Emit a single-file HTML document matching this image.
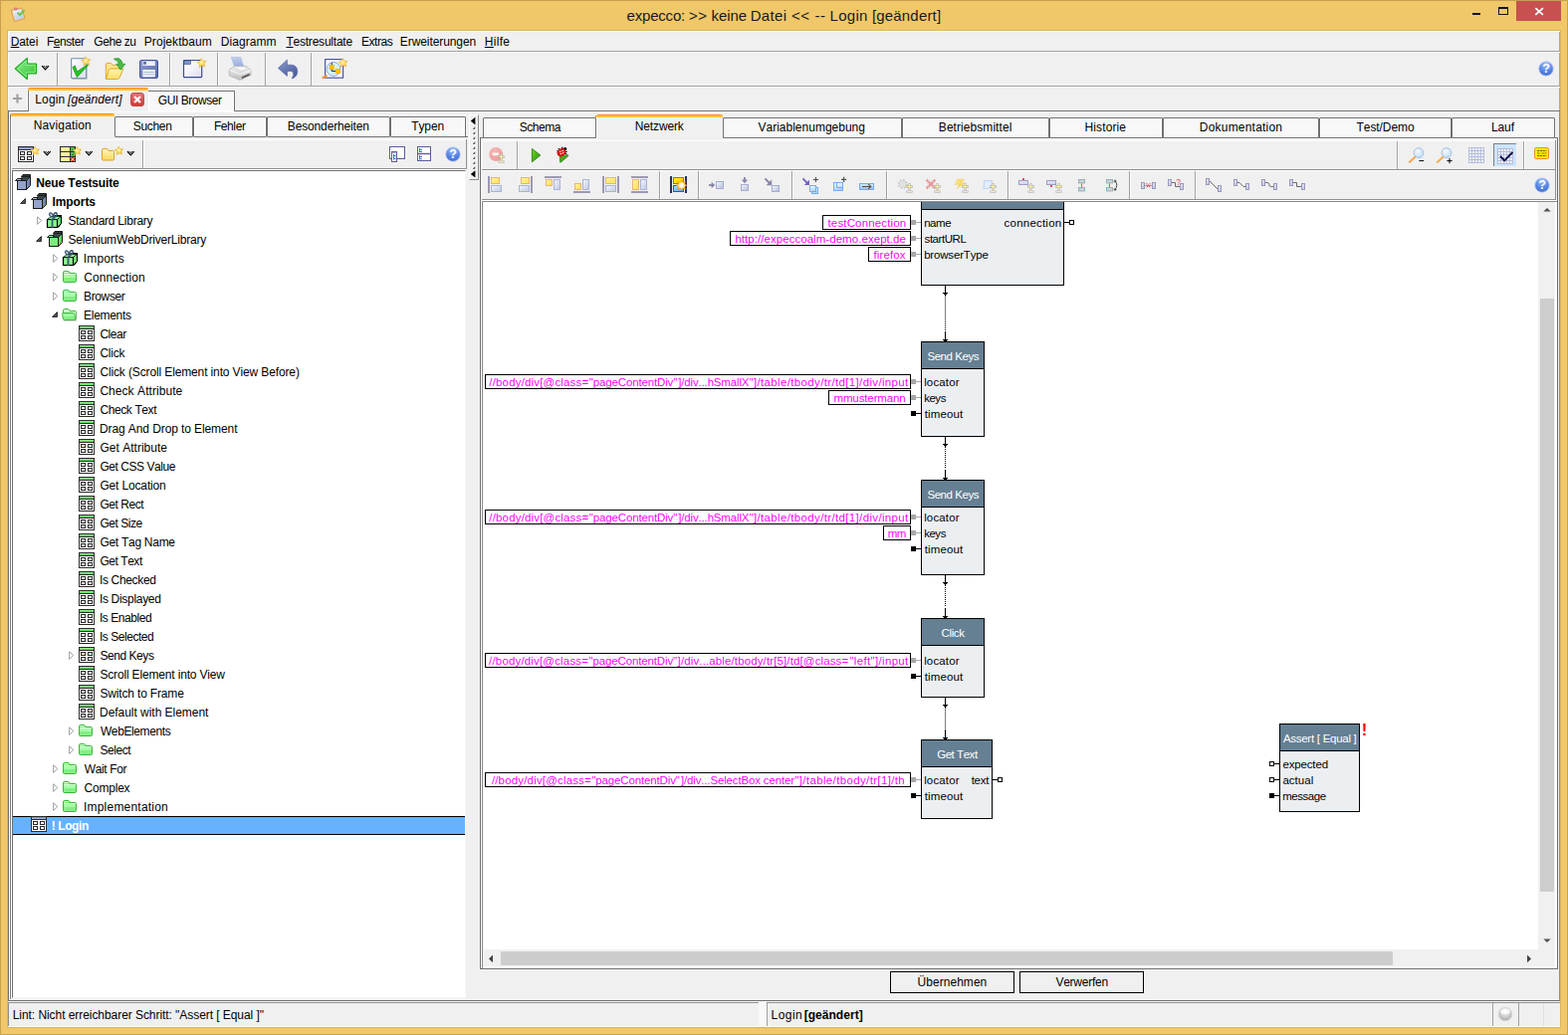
<!DOCTYPE html>
<html lang="de">
<head>
<meta charset="utf-8">
<title>expecco: &gt;&gt; keine Datei &lt;&lt; -- Login [geändert]</title>
<style>
html,body{margin:0;padding:0;}
body{width:1575px;height:1040px;overflow:hidden;background:#F0C869;font-family:"Liberation Sans",sans-serif;font-size:12px;color:#000;font-kerning:none;}
#win{position:absolute;left:0;top:0;width:1575px;height:1040px;overflow:hidden;background:#F0C869;}
#win div,#win svg{position:absolute;box-sizing:border-box;}
#win svg{overflow:visible;}
.t{white-space:pre;line-height:16px;height:16px;font-size:12px;}
.tab{background:#F8F8F8;border:1px solid #707070;box-shadow:inset 0 0 0 1px #fff;border-radius:1px;}
.sel{background:linear-gradient(#FF8A1F 0,#FF8A1F 1px,#FFC632 1px,#FFC12E 3px);border-radius:2px 2px 0 0;}

</style>
</head>
<body>
<div id="win">
<div style="left:0px;top:0px;width:1575px;height:1040px;border:1px solid #C4A24F;"></div>
<div class="t" style="left:629.56px;top:6px;line-height:19px;height:19px;font-size:15px;color:#1A1A1A;"><span style="letter-spacing:-0.190px;">expecco: </span><span style="margin-left:-0.10px;letter-spacing:0.450px;">&gt;&gt; </span><span style="margin-left:-0.41px;letter-spacing:-0.071px;">keine </span><span style="margin-left:-0.52px;letter-spacing:0.331px;">Datei </span><span style="margin-left:0.22px;letter-spacing:0.450px;">&lt;&lt; </span><span style="margin-left:0.48px;letter-spacing:0.450px;">-- </span><span style="margin-left:-0.52px;letter-spacing:0.276px;">Login </span><span style="margin-left:-0.26px;letter-spacing:0.187px;">[geändert]</span></div>
<div style="left:1523px;top:1px;width:45px;height:20px;background:#C75050;"></div>
<svg style="left:1541px;top:7px" width="10" height="10" viewBox="0 0 10 10"><path d="M1.3 1.1 L8.9 7.9 M8.9 1.1 L1.3 7.9" stroke="#fff" stroke-width="1.8" fill="none"/></svg>
<div style="left:1505px;top:7px;width:10px;height:8px;border:1px solid #14141E;border-top-width:2px;"></div>
<div style="left:1479px;top:13px;width:8px;height:2px;background:#14141E;"></div>
<div style="left:7px;top:30px;width:1561px;height:1003px;background:#D9B65B;"></div>
<div style="left:8px;top:31px;width:1559px;height:1001px;background:#F0F0F0;border-left:1px solid #fff;border-top:1px solid #fff;"></div>
<div style="left:1566px;top:32px;width:1px;height:79px;background:#A4A8B0;"></div>
<div class="t" style="left:10.72px;top:34px;line-height:16px;height:16px;letter-spacing:-0.105px;"><u>D</u>atei</div>
<div class="t" style="left:46.92px;top:34px;line-height:16px;height:16px;letter-spacing:-0.450px;">F<u>e</u>nster</div>
<div class="t" style="left:94.30px;top:34px;line-height:16px;height:16px;letter-spacing:-0.450px;">Gehe zu</div>
<div class="t" style="left:144.82px;top:34px;line-height:16px;height:16px;letter-spacing:0.051px;">Projektbaum</div>
<div class="t" style="left:221.82px;top:34px;line-height:16px;height:16px;letter-spacing:0.062px;">Diagramm</div>
<div class="t" style="left:287.43px;top:34px;line-height:16px;height:16px;letter-spacing:-0.222px;"><u>T</u>estresultate</div>
<div class="t" style="left:363.02px;top:34px;line-height:16px;height:16px;letter-spacing:-0.450px;">Extras</div>
<div class="t" style="left:401.82px;top:34px;line-height:16px;height:16px;letter-spacing:-0.085px;">Erweiterungen</div>
<div class="t" style="left:486.82px;top:34px;line-height:16px;height:16px;letter-spacing:0.303px;"><u>H</u>ilfe</div>
<div style="left:8px;top:51px;width:1559px;height:1px;background:#A0A0A0;"></div>
<div style="left:8px;top:52px;width:1559px;height:1px;background:#fff;"></div>
<div style="left:57px;top:53px;width:1px;height:33px;background:#A0A0A0;"></div>
<div style="left:58px;top:53px;width:1px;height:33px;background:#fff;"></div>
<div style="left:170px;top:53px;width:1px;height:33px;background:#A0A0A0;"></div>
<div style="left:171px;top:53px;width:1px;height:33px;background:#fff;"></div>
<div style="left:218px;top:53px;width:1px;height:33px;background:#A0A0A0;"></div>
<div style="left:219px;top:53px;width:1px;height:33px;background:#fff;"></div>
<div style="left:266px;top:53px;width:1px;height:33px;background:#A0A0A0;"></div>
<div style="left:267px;top:53px;width:1px;height:33px;background:#fff;"></div>
<div style="left:312px;top:53px;width:1px;height:33px;background:#A0A0A0;"></div>
<div style="left:313px;top:53px;width:1px;height:33px;background:#fff;"></div>
<div style="left:8px;top:86px;width:1559px;height:1px;background:#A0A0A0;"></div>
<div style="left:8px;top:87px;width:1559px;height:1px;background:#fff;"></div>
<div style="left:8px;top:111px;width:1559px;height:1px;background:#707070;"></div>
<div style="left:8px;top:112px;width:1559px;height:1px;background:#FAFAFA;"></div>
<div style="left:8px;top:110px;width:20px;height:1px;background:#fff;"></div>
<div style="left:27px;top:91px;width:1px;height:20px;background:#fff;"></div>
<div class="tab" style="left:148px;top:91px;width:88px;height:21px;border-bottom:none;"></div>
<div class="t" style="left:158.86px;top:93px;line-height:16px;height:16px;letter-spacing:-0.450px;">GUI Browser</div>
<div style="left:28px;top:89px;width:121px;height:23px;background:#F0F0F0;border-left:1px solid #787878;box-shadow:inset 1px 0 0 #fff;"></div>
<div class="sel" style="left:28px;top:88px;width:121px;height:3px;"></div>
<div style="left:29px;top:91px;width:119px;height:1px;background:#EEF0FA;"></div>
<div class="t" style="left:35.22px;top:92px;line-height:16px;height:16px;"><span style="letter-spacing:0.176px;">Login </span><i style="margin-left:-0.94px;letter-spacing:0.045px;">[geändert]</i></div>
<div style="left:8px;top:1005px;width:1559px;height:1px;background:#707070;"></div>
<div style="left:8px;top:1006px;width:1559px;height:1px;background:#F8F8F8;"></div>
<div style="left:8px;top:1007px;width:1559px;height:1px;background:#909090;"></div>
<div style="left:8px;top:1007px;width:1px;height:24px;background:#909090;"></div>
<div style="left:8px;top:1031px;width:1559px;height:1px;background:#fff;"></div>
<div class="t" style="left:12.72px;top:1012px;line-height:16px;height:16px;letter-spacing:-0.059px;">Lint: Nicht erreichbarer Schritt: &quot;Assert [ Equal ]&quot;</div>
<div style="left:762px;top:1007px;width:8px;height:25px;background:#F8F8F8;"></div>
<div style="left:770px;top:1008px;width:1px;height:23px;background:#A0A0A0;"></div>
<div class="t" style="left:774.62px;top:1012px;line-height:16px;height:16px;"><span style="letter-spacing:0.450px;">Login </span><b style="margin-left:-2.39px;letter-spacing:0.042px;">[geändert]</b></div>
<div style="left:1499px;top:1008px;width:1px;height:23px;background:#A0A0A0;"></div>
<div style="left:1525px;top:1008px;width:1px;height:23px;background:#A0A0A0;"></div>
<div style="left:1550px;top:1008px;width:1px;height:23px;background:#E0E0E0;"></div>
<svg style="left:0;top:0" width="1575" height="1040" viewBox="0 0 1575 1040"><linearGradient id="g1" x1="0" y1="0" x2="0.6" y2="1"><stop offset="0" stop-color="#F4F4FC"/><stop offset="1" stop-color="#B4CCEC"/></linearGradient><path d="M11.2 10.2 L21.6 8 L25.2 18.6 L14.4 21.6 Z" fill="#F0D8B0" stroke="#DC9850" stroke-width="1" stroke-linejoin="round"/><path d="M13 11 L21.4 9.2 L24 17.8 L15.4 20 Z" fill="url(#g1)"/><ellipse cx="15.8" cy="9" rx="2" ry="1.4" fill="#D88080"/><path d="M17.6 12.8 L19.8 15 L24.6 10.2" fill="none" stroke="#6CC850" stroke-width="2.2" stroke-linejoin="round"/><linearGradient id="g2" x1="0" y1="0" x2="1" y2="1"><stop offset="0" stop-color="#8CF08C"/><stop offset="1" stop-color="#35C035"/></linearGradient><path d="M15.3 69 L27.3 58.4 V64.2 H36.4 V73.8 H27.3 V79.6 Z" fill="url(#g2)" stroke="#1FA61F" stroke-width="1.2" stroke-linejoin="round"/><path d="M17.2 69 L26.2 61 V65.3 H35.3 V72.7 H26.2 V77 Z" fill="none" stroke="#A8F4A8" stroke-width="0.9" stroke-linejoin="round" opacity="0.8"/><path d="M42.099999999999994 66.1 L45.5 69.89999999999999 L48.9 66.1" fill="none" stroke="#000" stroke-width="1.25"/><path d="M43.8 65.89999999999999 L45.5 67.69999999999999 L47.199999999999996 65.89999999999999" fill="none" stroke="#000" stroke-width="0.9"/><linearGradient id="g3" x1="0" y1="0" x2="1" y2="1"><stop offset="0" stop-color="#FFFFFF"/><stop offset="1" stop-color="#DCDCEC"/></linearGradient><rect x="71.6" y="58.8" width="15" height="19.8" rx="0.8" fill="url(#g3)" stroke="#7090B0" stroke-width="1.1"/><path d="M72.5 79.3 H87.3 V60" fill="none" stroke="#A8B4C0" stroke-width="0.8"/><path d="M72.9 67.6 L75.3 66 L77.5 72 L88 64.8 L88.5 65.6 L77.4 77.6 Z" fill="#22C422" stroke="#169C16" stroke-width="0.8" stroke-linejoin="round"/><radialGradient id="g4" cx="0.45" cy="0.4" r="0.6"><stop offset="0" stop-color="#FFF6B0"/><stop offset="1" stop-color="#F5C030"/></radialGradient><polygon points="85.98,56.82 87.64,59.54 90.82,59.72 88.74,62.14 89.55,65.22 86.61,63.99 83.93,65.71 84.19,62.54 81.72,60.52 84.83,59.79" fill="url(#g4)" stroke="#E8B030" stroke-width="0.6" stroke-linejoin="round"/><linearGradient id="g5" x1="0" y1="0" x2="0" y2="1"><stop offset="0" stop-color="#FFF4B0"/><stop offset="1" stop-color="#FBDD6A"/></linearGradient><path d="M106.3 79.4 V65 Q106.3 63.4 108 63.4 H111.5 L113.2 65.4 H120 V69" fill="#FBE58A" stroke="#E0A828" stroke-width="1"/><path d="M106.5 79.5 L109.4 70.2 Q109.8 69 111 69 H123.8 L120.6 77 Q119.8 79.5 117.5 79.5 Z" fill="url(#g5)" stroke="#E0A828" stroke-width="1" stroke-linejoin="round"/><path d="M114.3 59.3 Q121.5 56.5 123.2 64.3 L125.8 64.3 L121.2 70.2 L116.8 64.3 L119.6 64.3 Q118.6 60.6 114.3 59.3 Z" fill="#4CB848" stroke="#2E9A2E" stroke-width="0.8" stroke-linejoin="round"/><linearGradient id="g6" x1="0" y1="0" x2="1" y2="1"><stop offset="0" stop-color="#8E9CCC"/><stop offset="1" stop-color="#5A6AA8"/></linearGradient><rect x="140.5" y="60.5" width="18" height="18" rx="1.6" fill="url(#g6)" stroke="#44529A" stroke-width="1"/><rect x="143.4" y="61.4" width="12.4" height="4.6" fill="#EEF0F8"/><rect x="144.2" y="62" width="2.6" height="2.8" fill="#5666A6"/><rect x="143.4" y="70" width="12.4" height="7.4" fill="#F4F6FC"/><path d="M144.4 72.5 H154.8 M144.4 74.8 H154.8" stroke="#A8B8D0" stroke-width="1"/><linearGradient id="g7" x1="0.2" y1="0.2" x2="1" y2="1"><stop offset="0" stop-color="#FFFFFF"/><stop offset="1" stop-color="#DEDCEE"/></linearGradient><rect x="184.5" y="60.5" width="18.2" height="17.2" rx="0.8" fill="url(#g7)" stroke="#3C4E92" stroke-width="1.2"/><rect x="185" y="61" width="6.6" height="3.6" fill="#8497C6" stroke="#3C4E92" stroke-width="0.6"/><radialGradient id="g8" cx="0.45" cy="0.4" r="0.6"><stop offset="0" stop-color="#FFF6B0"/><stop offset="1" stop-color="#F5C030"/></radialGradient><polygon points="202.18,58.62 203.84,61.34 207.02,61.52 204.94,63.94 205.75,67.02 202.81,65.79 200.13,67.51 200.39,64.34 197.92,62.32 201.03,61.59" fill="url(#g8)" stroke="#E8B030" stroke-width="0.6" stroke-linejoin="round"/><linearGradient id="g9" x1="0" y1="0" x2="0" y2="1"><stop offset="0" stop-color="#F2F2F2"/><stop offset="1" stop-color="#BDBDBD"/></linearGradient><linearGradient id="g10" x1="0" y1="0" x2="0" y2="1"><stop offset="0" stop-color="#C4D0EC"/><stop offset="1" stop-color="#94A8D8"/></linearGradient><path d="M232.3 57.4 H241.8 L245 67.6 H235.6 Z" fill="url(#g10)" stroke="#A8B8E0" stroke-width="0.6"/><path d="M230.3 70 L236 66.4 H247 L252 70.6 V75.6 L241 80.4 L230.3 76 Z" fill="url(#g9)" stroke="#B4B4B4" stroke-width="0.8" stroke-linejoin="round"/><path d="M236.6 68.6 L239 67 H246 L248.4 69 L242 71.2 Z" fill="#F8F8F8" stroke="#C8C8C8" stroke-width="0.5"/><path d="M230.6 70.4 L241 74.6 L252 70.8" fill="none" stroke="#FFFFFF" stroke-width="0.8"/><path d="M242.6 77.2 L250.4 73.8 L251 75.8 L243.4 79.2 Z" fill="#606060"/><path d="M244 79.6 L252.6 76 " stroke="#E8E8E8" stroke-width="1"/><linearGradient id="g11" x1="0" y1="0" x2="0.6" y2="1"><stop offset="0" stop-color="#8C9CD0"/><stop offset="1" stop-color="#4A5C9C"/></linearGradient><path d="M279.4 68.4 L288.4 60.2 V65.2 H292.6 Q298.8 65.6 298.8 72 Q298.6 76.6 294 78.8 Q293.4 79 293.2 78.6 Q296 75.4 294.2 72.6 Q293.4 71.4 291.6 71.4 H288.4 V76.4 Z" fill="url(#g11)" stroke="#5566A6" stroke-width="0.7" stroke-linejoin="round"/><rect x="326.6" y="59.6" width="18" height="18.6" fill="#FBF6FA" stroke="#3C4E9A" stroke-width="1.1"/><path d="M327.6 76.2 L324.6 78" stroke="#F09038" stroke-width="2.4" stroke-linecap="round"/><circle cx="335" cy="69.4" r="7" fill="#D4F0FA" stroke="#8C9CD8" stroke-width="0.9"/><path d="M333.2 63 V66 M333.2 68 V71.4 H338" fill="none" stroke="#202020" stroke-width="1"/><rect x="331" y="65.4" width="4.4" height="4.4" fill="#FFC400" stroke="#E8A800" stroke-width="0.5"/><rect x="337.2" y="69.4" width="4.2" height="4.4" fill="#FFC400" stroke="#E8A800" stroke-width="0.5"/><radialGradient id="g12" cx="0.45" cy="0.4" r="0.6"><stop offset="0" stop-color="#FFF6B0"/><stop offset="1" stop-color="#F5C030"/></radialGradient><polygon points="344.18,58.62 345.84,61.34 349.02,61.52 346.94,63.94 347.75,67.02 344.81,65.79 342.13,67.51 342.39,64.34 339.92,62.32 343.03,61.59" fill="url(#g12)" stroke="#E8B030" stroke-width="0.6" stroke-linejoin="round"/><radialGradient id="g13" cx="0.5" cy="0.2" r="0.9"><stop offset="0" stop-color="#A8C4F8"/><stop offset="0.55" stop-color="#5584E4"/><stop offset="1" stop-color="#3A66D0"/></radialGradient><circle cx="1553" cy="69" r="7.3" fill="url(#g13)" stroke="#C4D4F4" stroke-width="0.8"/><text x="1553" y="73.4" text-anchor="middle" font-family="Liberation Sans, sans-serif" font-weight="bold" font-size="12.5" fill="#fff">?</text><path d="M17.5 94.4 V103.6 M12.9 99 H22.1" stroke="#A2A2A2" stroke-width="2.2"/><linearGradient id="g14" x1="0" y1="0" x2="0" y2="1"><stop offset="0" stop-color="#E87878"/><stop offset="1" stop-color="#D03434"/></linearGradient><rect x="131.5" y="93.5" width="13" height="13" rx="2.6" fill="url(#g14)" stroke="#C84848" stroke-width="1"/><path d="M135 97 L141 103 M141 97 L135 103" stroke="#fff" stroke-width="2.2"/><g transform="translate(18,147)"><g shape-rendering="crispEdges"><rect x="0.5" y="0.5" width="15" height="15" fill="#fff" stroke="#2B2B2B" stroke-width="1"/><rect x="1" y="1" width="14" height="2" fill="#A4B2DA"/><rect x="1" y="1" width="14" height="1" fill="#8090C4"/><rect x="1" y="3" width="14" height="1" fill="#2B2B2B"/><rect x="2.5" y="5.5" width="4" height="3" fill="#fff" stroke="#2B2B2B" stroke-width="1"/><rect x="2.5" y="10.5" width="4" height="3" fill="#fff" stroke="#2B2B2B" stroke-width="1"/><rect x="9.5" y="5.5" width="4" height="3" fill="#fff" stroke="#2B2B2B" stroke-width="1"/><rect x="9.5" y="10.5" width="4" height="3" fill="#fff" stroke="#2B2B2B" stroke-width="1"/></g></g><radialGradient id="g15" cx="0.45" cy="0.4" r="0.6"><stop offset="0" stop-color="#FFF6B0"/><stop offset="1" stop-color="#F5C030"/></radialGradient><polygon points="35.00,147.22 36.58,149.83 39.63,150.00 37.64,152.32 38.42,155.27 35.60,154.09 33.03,155.74 33.28,152.70 30.92,150.77 33.89,150.06" fill="url(#g15)" stroke="#E8B030" stroke-width="0.6" stroke-linejoin="round"/><path d="M43.9 152.1 L47.300000000000004 155.9 L50.7 152.1" fill="none" stroke="#000" stroke-width="1.25"/><path d="M45.6 151.9 L47.300000000000004 153.7 L49.0 151.9" fill="none" stroke="#000" stroke-width="0.9"/><rect x="60.5" y="147.5" width="15" height="15" fill="#FFF79A" stroke="#2B2B2B" stroke-width="1"/><path d="M60.5 152.5 H75.5 M60.5 157.5 H75.5 M70.5 147.5 V162.5" stroke="#2B2B2B" stroke-width="1"/><rect x="71" y="148" width="4" height="4" fill="#58C858"/><rect x="71" y="153" width="4" height="4" fill="#58C858"/><path d="M71.6 149.8 L72.8 151.2 L74.6 148.6 M71.6 154.8 L72.8 156.2 L74.6 153.6" fill="none" stroke="#0A7A0A" stroke-width="0.9"/><circle cx="73" cy="160" r="1.5" fill="#FFF79A" stroke="#F01010" stroke-width="1.1"/><radialGradient id="g16" cx="0.45" cy="0.4" r="0.6"><stop offset="0" stop-color="#FFF6B0"/><stop offset="1" stop-color="#F5C030"/></radialGradient><polygon points="77.20,147.22 78.78,149.83 81.83,150.00 79.84,152.32 80.62,155.27 77.80,154.09 75.23,155.74 75.48,152.70 73.12,150.77 76.09,150.06" fill="url(#g16)" stroke="#E8B030" stroke-width="0.6" stroke-linejoin="round"/><path d="M85.89999999999999 152.1 L89.3 155.9 L92.69999999999999 152.1" fill="none" stroke="#000" stroke-width="1.25"/><path d="M87.6 151.9 L89.3 153.7 L91.0 151.9" fill="none" stroke="#000" stroke-width="0.9"/><linearGradient id="g17" x1="0" y1="0" x2="0" y2="1"><stop offset="0" stop-color="#FFF8B8"/><stop offset="1" stop-color="#F8D860"/></linearGradient><path d="M102.5 160 V150.6 Q102.5 149.4 103.8 149.4 H107 Q108 149.4 108.4 150.4 L108.8 151.4 H113.6 Q114.6 151.4 114.6 152.4 V160 Q114.6 161 113.6 161 H103.5 Q102.5 161 102.5 160 Z" fill="url(#g17)" stroke="#DCA030" stroke-width="1"/><radialGradient id="g18" cx="0.45" cy="0.4" r="0.6"><stop offset="0" stop-color="#FFF6B0"/><stop offset="1" stop-color="#F5C030"/></radialGradient><polygon points="119.20,147.02 120.78,149.63 123.83,149.80 121.84,152.12 122.62,155.07 119.80,153.89 117.23,155.54 117.48,152.50 115.12,150.57 118.09,149.86" fill="url(#g18)" stroke="#E8B030" stroke-width="0.6" stroke-linejoin="round"/><path d="M127.89999999999999 152.1 L131.29999999999998 155.9 L134.7 152.1" fill="none" stroke="#000" stroke-width="1.25"/><path d="M129.6 151.9 L131.29999999999998 153.7 L133.0 151.9" fill="none" stroke="#000" stroke-width="0.9"/><rect x="391.5" y="147.5" width="15" height="12" fill="#fff" stroke="#5C5C9C" stroke-width="1"/><rect x="393.5" y="152.5" width="5" height="10" fill="#fff" stroke="#5C5C9C" stroke-width="1"/><path d="M394 153.4 H398" stroke="#A8B0D0" stroke-width="1"/><path d="M395.5 155 V160.4 M395.5 156.6 H397.6 M395.5 159.4 H397.6" stroke="#2878D8" stroke-width="1" fill="none"/><rect x="419.5" y="147.5" width="13" height="14" fill="#fff" stroke="#5C5C9C" stroke-width="1"/><path d="M419.5 154.5 H432.5" stroke="#5C5C9C" stroke-width="1.4"/><path d="M421.5 149 V153 M421.5 150.2 H424 M421.5 152.4 H424 M421.5 156 V160.4 M421.5 157.6 H424 M421.5 159.8 H424" stroke="#2878D8" stroke-width="1" fill="none"/><radialGradient id="g19" cx="0.5" cy="0.2" r="0.9"><stop offset="0" stop-color="#A8C4F8"/><stop offset="0.55" stop-color="#5584E4"/><stop offset="1" stop-color="#3A66D0"/></radialGradient><circle cx="455" cy="155" r="7.3" fill="url(#g19)" stroke="#C4D4F4" stroke-width="0.8"/><text x="455" y="159.4" text-anchor="middle" font-family="Liberation Sans, sans-serif" font-weight="bold" font-size="12.5" fill="#fff">?</text></svg>
<div class="tab" style="left:115px;top:117px;width:79px;height:21px;"></div>
<div class="t" style="left:133.86px;top:119px;line-height:16px;height:16px;letter-spacing:-0.335px;">Suchen</div>
<div class="tab" style="left:194px;top:117px;width:74px;height:21px;"></div>
<div class="t" style="left:214.92px;top:119px;line-height:16px;height:16px;letter-spacing:-0.406px;">Fehler</div>
<div class="tab" style="left:268px;top:117px;width:124px;height:21px;"></div>
<div class="t" style="left:288.82px;top:119px;line-height:16px;height:16px;letter-spacing:-0.146px;">Besonderheiten</div>
<div class="tab" style="left:392px;top:117px;width:76px;height:21px;"></div>
<div class="t" style="left:413.33px;top:119px;line-height:16px;height:16px;letter-spacing:-0.151px;">Typen</div>
<div style="left:467px;top:137px;width:3px;height:1px;background:#707070;"></div>
<div class="sel" style="left:10px;top:114px;width:105px;height:3px;"></div>
<div style="left:11px;top:117px;width:104px;height:1px;background:#EEF0FA;"></div>
<div class="t" style="left:33.72px;top:118px;line-height:16px;height:16px;letter-spacing:0.151px;">Navigation</div>
<div style="left:8px;top:112px;width:1px;height:894px;background:#707070;"></div>
<div style="left:9px;top:112px;width:1px;height:893px;background:#fff;"></div>
<div style="left:10px;top:115px;width:1px;height:889px;background:#808080;"></div>
<div style="left:11px;top:117px;width:1px;height:886px;background:#fff;"></div>
<div style="left:12px;top:140px;width:456px;height:1px;background:#fff;"></div>
<div style="left:12px;top:169px;width:457px;height:1px;background:#909090;"></div>
<div style="left:468px;top:140px;width:1px;height:30px;background:#909090;"></div>
<div style="left:12px;top:170px;width:457px;height:1px;background:#fff;"></div>
<div style="left:143px;top:141px;width:1px;height:28px;background:#A0A0A0;"></div>
<div style="left:144px;top:141px;width:1px;height:28px;background:#fff;"></div>
<div style="left:12px;top:171px;width:456px;height:832px;background:#fff;border-left:1px solid #707070;border-top:1px solid #707070;border-right:1px solid #F8F8F8;border-bottom:1px solid #F8F8F8;"></div>
<svg style="left:15px;top:175px" width="16" height="16" viewBox="0 0 16 16"><path d="M6.5 2.5 L8 0.5 H15.5 V3.5" fill="#2F3B3B" stroke="#1C1C1C" stroke-width="1"/><path d="M6.5 2.5 H15.5 V11.5 L11.5 15.5 V6.5 Z" fill="#7485B5" stroke="#1C1C1C" stroke-width="1" stroke-linejoin="round"/><path d="M6.6 3 H15 L12 6 H5 Z" fill="#3A4848" stroke="none"/><rect x="2.5" y="6.5" width="9" height="9" fill="#93A3CC" stroke="#1C1C1C" stroke-width="1"/><path d="M0.5 6.5 L2.5 4.5 H7.5 L5.5 6.5 Z" fill="#A9B6DA" stroke="#1C1C1C" stroke-width="1" stroke-linejoin="round"/><path d="M11.5 6.5 L15.5 2.5" stroke="#1C1C1C" stroke-width="1"/></svg>
<div class="t" style="left:36.30px;top:176px;line-height:16px;height:16px;letter-spacing:-0.150px;font-weight:bold;">Neue Testsuite</div>
<svg style="left:19px;top:198px" width="8" height="8" viewBox="0 0 8 8"><path d="M6.4 1.6 V6.4 H1.6 Z" fill="#595959" stroke="#262626" stroke-width="1" stroke-linejoin="round"/></svg>
<svg style="left:31px;top:194px" width="16" height="16" viewBox="0 0 16 16"><path d="M6.5 2.5 L8 0.5 H15.5 V3.5" fill="#2F3B3B" stroke="#1C1C1C" stroke-width="1"/><path d="M6.5 2.5 H15.5 V11.5 L11.5 15.5 V6.5 Z" fill="#7485B5" stroke="#1C1C1C" stroke-width="1" stroke-linejoin="round"/><path d="M6.6 3 H15 L12 6 H5 Z" fill="#3A4848" stroke="none"/><rect x="2.5" y="6.5" width="9" height="9" fill="#93A3CC" stroke="#1C1C1C" stroke-width="1"/><path d="M0.5 6.5 L2.5 4.5 H7.5 L5.5 6.5 Z" fill="#A9B6DA" stroke="#1C1C1C" stroke-width="1" stroke-linejoin="round"/><path d="M11.5 6.5 L15.5 2.5" stroke="#1C1C1C" stroke-width="1"/></svg>
<div class="t" style="left:52.40px;top:195px;line-height:16px;height:16px;letter-spacing:-0.068px;font-weight:bold;">Imports</div>
<svg style="left:37px;top:216.5px" width="7" height="10" viewBox="0 0 7 10"><path d="M0.6 0.8 L4.8 4.6 L0.6 8.4 Z" fill="#fff" stroke="#A0A0A0" stroke-width="1"/></svg>
<svg style="left:47px;top:213px" width="16" height="16" viewBox="0 0 16 16"><path d="M4.5 5.5 L7.5 3.5 H14.5 V11.5 L11.5 15.5" fill="#7FE87F" stroke="#000" stroke-width="1" stroke-linejoin="round"/><rect x="0.5" y="7.5" width="10" height="8" fill="#8CF58C" stroke="#000" stroke-width="1.2"/><path d="M10.5 7.5 L14.5 3.5 V11.5 L10.5 15.5 Z" fill="#6FDC6F" stroke="#000" stroke-width="1" stroke-linejoin="round"/><path d="M0.5 7.5 L4.5 4.5 H14 L10.5 7.5 Z" fill="#9CFF9C" stroke="#000" stroke-width="0.8" stroke-linejoin="round"/><rect x="4.6" y="7" width="1.8" height="9" fill="#3E5A78"/><path d="M5.5 7 L9.5 4" stroke="#3E5A78" stroke-width="1.6"/><path d="M5.5 5.5 Q1.5 3 3 1.2 Q5 0 6.5 4.5 Q7 0.5 9.5 0.8 Q11.5 2 8.5 5" fill="none" stroke="#3E5A78" stroke-width="1.4"/></svg>
<div class="t" style="left:68.46px;top:214px;line-height:16px;height:16px;letter-spacing:-0.237px;">Standard Library</div>
<svg style="left:35px;top:236px" width="8" height="8" viewBox="0 0 8 8"><path d="M6.4 1.6 V6.4 H1.6 Z" fill="#595959" stroke="#262626" stroke-width="1" stroke-linejoin="round"/></svg>
<svg style="left:47px;top:232px" width="16" height="16" viewBox="0 0 16 16"><path d="M6.5 2.5 L8 0.5 H15.5 V3.5" fill="#2F3B3B" stroke="#1C1C1C" stroke-width="1"/><path d="M6.5 2.5 H15.5 V11.5 L11.5 15.5 V6.5 Z" fill="#5FD35F" stroke="#1C1C1C" stroke-width="1" stroke-linejoin="round"/><path d="M6.6 3 H15 L12 6 H5 Z" fill="#3A4848" stroke="none"/><rect x="2.5" y="6.5" width="9" height="9" fill="#7BEB7B" stroke="#1C1C1C" stroke-width="1"/><path d="M0.5 6.5 L2.5 4.5 H7.5 L5.5 6.5 Z" fill="#98F598" stroke="#1C1C1C" stroke-width="1" stroke-linejoin="round"/><path d="M11.5 6.5 L15.5 2.5" stroke="#1C1C1C" stroke-width="1"/></svg>
<div class="t" style="left:68.46px;top:233px;line-height:16px;height:16px;letter-spacing:-0.196px;">SeleniumWebDriverLibrary</div>
<svg style="left:53px;top:254.5px" width="7" height="10" viewBox="0 0 7 10"><path d="M0.6 0.8 L4.8 4.6 L0.6 8.4 Z" fill="#fff" stroke="#A0A0A0" stroke-width="1"/></svg>
<svg style="left:63px;top:251px" width="16" height="16" viewBox="0 0 16 16"><path d="M4.5 5.5 L7.5 3.5 H14.5 V11.5 L11.5 15.5" fill="#7FE87F" stroke="#000" stroke-width="1" stroke-linejoin="round"/><rect x="0.5" y="7.5" width="10" height="8" fill="#8CF58C" stroke="#000" stroke-width="1.2"/><path d="M10.5 7.5 L14.5 3.5 V11.5 L10.5 15.5 Z" fill="#6FDC6F" stroke="#000" stroke-width="1" stroke-linejoin="round"/><path d="M0.5 7.5 L4.5 4.5 H14 L10.5 7.5 Z" fill="#9CFF9C" stroke="#000" stroke-width="0.8" stroke-linejoin="round"/><rect x="4.6" y="7" width="1.8" height="9" fill="#3E5A78"/><path d="M5.5 7 L9.5 4" stroke="#3E5A78" stroke-width="1.6"/><path d="M5.5 5.5 Q1.5 3 3 1.2 Q5 0 6.5 4.5 Q7 0.5 9.5 0.8 Q11.5 2 8.5 5" fill="none" stroke="#3E5A78" stroke-width="1.4"/></svg>
<div class="t" style="left:83.79px;top:252px;line-height:16px;height:16px;letter-spacing:0.156px;">Imports</div>
<svg style="left:53px;top:273.5px" width="7" height="10" viewBox="0 0 7 10"><path d="M0.6 0.8 L4.8 4.6 L0.6 8.4 Z" fill="#fff" stroke="#A0A0A0" stroke-width="1"/></svg>
<svg style="left:63px;top:272px" width="14" height="12" viewBox="0 0 14 12"><path d="M0.5 10.5 V1.6 Q0.5 0.5 1.6 0.5 H5.4 Q6.4 0.5 6.7 1.5 L7 2.5 H12.4 Q13.5 2.5 13.5 3.6 V10.4 Q13.5 11.5 12.4 11.5 H1.6 Q0.5 11.5 0.5 10.5 Z" fill="#84EE84" stroke="#3CB63C" stroke-width="1"/><path d="M1.2 3.6 H12.8 V7 H1.2 Z" fill="#A6FFA6"/><path d="M1.6 1.5 H5.6" stroke="#E4FFE4" stroke-width="1"/><path d="M1.2 3.5 H12.8" stroke="#D8FFD8" stroke-width="1"/></svg>
<div class="t" style="left:84.29px;top:271px;line-height:16px;height:16px;letter-spacing:0.076px;">Connection</div>
<svg style="left:53px;top:292.5px" width="7" height="10" viewBox="0 0 7 10"><path d="M0.6 0.8 L4.8 4.6 L0.6 8.4 Z" fill="#fff" stroke="#A0A0A0" stroke-width="1"/></svg>
<svg style="left:63px;top:291px" width="14" height="12" viewBox="0 0 14 12"><path d="M0.5 10.5 V1.6 Q0.5 0.5 1.6 0.5 H5.4 Q6.4 0.5 6.7 1.5 L7 2.5 H12.4 Q13.5 2.5 13.5 3.6 V10.4 Q13.5 11.5 12.4 11.5 H1.6 Q0.5 11.5 0.5 10.5 Z" fill="#84EE84" stroke="#3CB63C" stroke-width="1"/><path d="M1.2 3.6 H12.8 V7 H1.2 Z" fill="#A6FFA6"/><path d="M1.6 1.5 H5.6" stroke="#E4FFE4" stroke-width="1"/><path d="M1.2 3.5 H12.8" stroke="#D8FFD8" stroke-width="1"/></svg>
<div class="t" style="left:84.12px;top:290px;line-height:16px;height:16px;letter-spacing:-0.388px;">Browser</div>
<svg style="left:51px;top:312px" width="8" height="8" viewBox="0 0 8 8"><path d="M6.4 1.6 V6.4 H1.6 Z" fill="#595959" stroke="#262626" stroke-width="1" stroke-linejoin="round"/></svg>
<svg style="left:62px;top:310px" width="16" height="13" viewBox="0 0 16 13"><path d="M1.5 8 V1.6 Q1.5 0.5 2.6 0.5 H6.4 Q7.4 0.5 7.7 1.5 L8 2.5 H13.4 Q14.5 2.5 14.5 3.6 V10.4 Q14.5 11.5 13.4 11.5 H3 Z" fill="#D0FFD0" stroke="#3CB63C" stroke-width="1"/><path d="M0.6 5.6 Q0.4 4.5 1.6 4.5 H11.6 Q12.6 4.5 12.8 5.5 L13.6 10.5 Q13.8 11.6 12.8 11.6 H2.6 Q1.6 11.6 1.4 10.6 Z" fill="#84EE84" stroke="#3CB63C" stroke-width="1"/><path d="M1.4 5.4 H12 L12.4 8 H1.8 Z" fill="#A6FFA6"/><path d="M2 12.4 H14.6 V4.4" fill="none" stroke="#B4B4B4" stroke-width="0.8" opacity="0.7"/></svg>
<div class="t" style="left:84.12px;top:309px;line-height:16px;height:16px;letter-spacing:-0.315px;">Elements</div>
<svg style="left:79px;top:327px" width="16" height="16" viewBox="0 0 16 16"><g shape-rendering="crispEdges"><rect x="0.5" y="0.5" width="15" height="15" fill="#fff" stroke="#2B2B2B" stroke-width="1"/><rect x="1" y="1" width="14" height="2" fill="#5FE35F"/><rect x="1" y="1" width="14" height="1" fill="#8BF28B"/><rect x="1" y="3" width="14" height="1" fill="#2B2B2B"/><rect x="2.5" y="5.5" width="4" height="3" fill="#fff" stroke="#2B2B2B" stroke-width="1"/><rect x="2.5" y="10.5" width="4" height="3" fill="#fff" stroke="#2B2B2B" stroke-width="1"/><rect x="9.5" y="5.5" width="4" height="3" fill="#fff" stroke="#2B2B2B" stroke-width="1"/><rect x="9.5" y="10.5" width="4" height="3" fill="#fff" stroke="#2B2B2B" stroke-width="1"/></g></svg>
<div class="t" style="left:100.39px;top:328px;line-height:16px;height:16px;letter-spacing:-0.450px;">Clear</div>
<svg style="left:79px;top:346px" width="16" height="16" viewBox="0 0 16 16"><g shape-rendering="crispEdges"><rect x="0.5" y="0.5" width="15" height="15" fill="#fff" stroke="#2B2B2B" stroke-width="1"/><rect x="1" y="1" width="14" height="2" fill="#5FE35F"/><rect x="1" y="1" width="14" height="1" fill="#8BF28B"/><rect x="1" y="3" width="14" height="1" fill="#2B2B2B"/><rect x="2.5" y="5.5" width="4" height="3" fill="#fff" stroke="#2B2B2B" stroke-width="1"/><rect x="2.5" y="10.5" width="4" height="3" fill="#fff" stroke="#2B2B2B" stroke-width="1"/><rect x="9.5" y="5.5" width="4" height="3" fill="#fff" stroke="#2B2B2B" stroke-width="1"/><rect x="9.5" y="10.5" width="4" height="3" fill="#fff" stroke="#2B2B2B" stroke-width="1"/></g></svg>
<div class="t" style="left:100.39px;top:347px;line-height:16px;height:16px;letter-spacing:-0.202px;">Click</div>
<svg style="left:79px;top:365px" width="16" height="16" viewBox="0 0 16 16"><g shape-rendering="crispEdges"><rect x="0.5" y="0.5" width="15" height="15" fill="#fff" stroke="#2B2B2B" stroke-width="1"/><rect x="1" y="1" width="14" height="2" fill="#5FE35F"/><rect x="1" y="1" width="14" height="1" fill="#8BF28B"/><rect x="1" y="3" width="14" height="1" fill="#2B2B2B"/><rect x="2.5" y="5.5" width="4" height="3" fill="#fff" stroke="#2B2B2B" stroke-width="1"/><rect x="2.5" y="10.5" width="4" height="3" fill="#fff" stroke="#2B2B2B" stroke-width="1"/><rect x="9.5" y="5.5" width="4" height="3" fill="#fff" stroke="#2B2B2B" stroke-width="1"/><rect x="9.5" y="10.5" width="4" height="3" fill="#fff" stroke="#2B2B2B" stroke-width="1"/></g></svg>
<div class="t" style="left:100.39px;top:366px;line-height:16px;height:16px;letter-spacing:-0.128px;">Click (Scroll Element into View Before)</div>
<svg style="left:79px;top:384px" width="16" height="16" viewBox="0 0 16 16"><g shape-rendering="crispEdges"><rect x="0.5" y="0.5" width="15" height="15" fill="#fff" stroke="#2B2B2B" stroke-width="1"/><rect x="1" y="1" width="14" height="2" fill="#5FE35F"/><rect x="1" y="1" width="14" height="1" fill="#8BF28B"/><rect x="1" y="3" width="14" height="1" fill="#2B2B2B"/><rect x="2.5" y="5.5" width="4" height="3" fill="#fff" stroke="#2B2B2B" stroke-width="1"/><rect x="2.5" y="10.5" width="4" height="3" fill="#fff" stroke="#2B2B2B" stroke-width="1"/><rect x="9.5" y="5.5" width="4" height="3" fill="#fff" stroke="#2B2B2B" stroke-width="1"/><rect x="9.5" y="10.5" width="4" height="3" fill="#fff" stroke="#2B2B2B" stroke-width="1"/></g></svg>
<div class="t" style="left:100.39px;top:385px;line-height:16px;height:16px;letter-spacing:0.058px;">Check Attribute</div>
<svg style="left:79px;top:403px" width="16" height="16" viewBox="0 0 16 16"><g shape-rendering="crispEdges"><rect x="0.5" y="0.5" width="15" height="15" fill="#fff" stroke="#2B2B2B" stroke-width="1"/><rect x="1" y="1" width="14" height="2" fill="#5FE35F"/><rect x="1" y="1" width="14" height="1" fill="#8BF28B"/><rect x="1" y="3" width="14" height="1" fill="#2B2B2B"/><rect x="2.5" y="5.5" width="4" height="3" fill="#fff" stroke="#2B2B2B" stroke-width="1"/><rect x="2.5" y="10.5" width="4" height="3" fill="#fff" stroke="#2B2B2B" stroke-width="1"/><rect x="9.5" y="5.5" width="4" height="3" fill="#fff" stroke="#2B2B2B" stroke-width="1"/><rect x="9.5" y="10.5" width="4" height="3" fill="#fff" stroke="#2B2B2B" stroke-width="1"/></g></svg>
<div class="t" style="left:100.39px;top:404px;line-height:16px;height:16px;letter-spacing:-0.388px;">Check Text</div>
<svg style="left:79px;top:422px" width="16" height="16" viewBox="0 0 16 16"><g shape-rendering="crispEdges"><rect x="0.5" y="0.5" width="15" height="15" fill="#fff" stroke="#2B2B2B" stroke-width="1"/><rect x="1" y="1" width="14" height="2" fill="#5FE35F"/><rect x="1" y="1" width="14" height="1" fill="#8BF28B"/><rect x="1" y="3" width="14" height="1" fill="#2B2B2B"/><rect x="2.5" y="5.5" width="4" height="3" fill="#fff" stroke="#2B2B2B" stroke-width="1"/><rect x="2.5" y="10.5" width="4" height="3" fill="#fff" stroke="#2B2B2B" stroke-width="1"/><rect x="9.5" y="5.5" width="4" height="3" fill="#fff" stroke="#2B2B2B" stroke-width="1"/><rect x="9.5" y="10.5" width="4" height="3" fill="#fff" stroke="#2B2B2B" stroke-width="1"/></g></svg>
<div class="t" style="left:100.02px;top:423px;line-height:16px;height:16px;letter-spacing:-0.098px;">Drag And Drop to Element</div>
<svg style="left:79px;top:441px" width="16" height="16" viewBox="0 0 16 16"><g shape-rendering="crispEdges"><rect x="0.5" y="0.5" width="15" height="15" fill="#fff" stroke="#2B2B2B" stroke-width="1"/><rect x="1" y="1" width="14" height="2" fill="#5FE35F"/><rect x="1" y="1" width="14" height="1" fill="#8BF28B"/><rect x="1" y="3" width="14" height="1" fill="#2B2B2B"/><rect x="2.5" y="5.5" width="4" height="3" fill="#fff" stroke="#2B2B2B" stroke-width="1"/><rect x="2.5" y="10.5" width="4" height="3" fill="#fff" stroke="#2B2B2B" stroke-width="1"/><rect x="9.5" y="5.5" width="4" height="3" fill="#fff" stroke="#2B2B2B" stroke-width="1"/><rect x="9.5" y="10.5" width="4" height="3" fill="#fff" stroke="#2B2B2B" stroke-width="1"/></g></svg>
<div class="t" style="left:100.40px;top:442px;line-height:16px;height:16px;letter-spacing:0.023px;">Get Attribute</div>
<svg style="left:79px;top:460px" width="16" height="16" viewBox="0 0 16 16"><g shape-rendering="crispEdges"><rect x="0.5" y="0.5" width="15" height="15" fill="#fff" stroke="#2B2B2B" stroke-width="1"/><rect x="1" y="1" width="14" height="2" fill="#5FE35F"/><rect x="1" y="1" width="14" height="1" fill="#8BF28B"/><rect x="1" y="3" width="14" height="1" fill="#2B2B2B"/><rect x="2.5" y="5.5" width="4" height="3" fill="#fff" stroke="#2B2B2B" stroke-width="1"/><rect x="2.5" y="10.5" width="4" height="3" fill="#fff" stroke="#2B2B2B" stroke-width="1"/><rect x="9.5" y="5.5" width="4" height="3" fill="#fff" stroke="#2B2B2B" stroke-width="1"/><rect x="9.5" y="10.5" width="4" height="3" fill="#fff" stroke="#2B2B2B" stroke-width="1"/></g></svg>
<div class="t" style="left:100.40px;top:461px;line-height:16px;height:16px;letter-spacing:-0.450px;">Get CSS Value</div>
<svg style="left:79px;top:479px" width="16" height="16" viewBox="0 0 16 16"><g shape-rendering="crispEdges"><rect x="0.5" y="0.5" width="15" height="15" fill="#fff" stroke="#2B2B2B" stroke-width="1"/><rect x="1" y="1" width="14" height="2" fill="#5FE35F"/><rect x="1" y="1" width="14" height="1" fill="#8BF28B"/><rect x="1" y="3" width="14" height="1" fill="#2B2B2B"/><rect x="2.5" y="5.5" width="4" height="3" fill="#fff" stroke="#2B2B2B" stroke-width="1"/><rect x="2.5" y="10.5" width="4" height="3" fill="#fff" stroke="#2B2B2B" stroke-width="1"/><rect x="9.5" y="5.5" width="4" height="3" fill="#fff" stroke="#2B2B2B" stroke-width="1"/><rect x="9.5" y="10.5" width="4" height="3" fill="#fff" stroke="#2B2B2B" stroke-width="1"/></g></svg>
<div class="t" style="left:100.40px;top:480px;line-height:16px;height:16px;letter-spacing:-0.151px;">Get Location</div>
<svg style="left:79px;top:498px" width="16" height="16" viewBox="0 0 16 16"><g shape-rendering="crispEdges"><rect x="0.5" y="0.5" width="15" height="15" fill="#fff" stroke="#2B2B2B" stroke-width="1"/><rect x="1" y="1" width="14" height="2" fill="#5FE35F"/><rect x="1" y="1" width="14" height="1" fill="#8BF28B"/><rect x="1" y="3" width="14" height="1" fill="#2B2B2B"/><rect x="2.5" y="5.5" width="4" height="3" fill="#fff" stroke="#2B2B2B" stroke-width="1"/><rect x="2.5" y="10.5" width="4" height="3" fill="#fff" stroke="#2B2B2B" stroke-width="1"/><rect x="9.5" y="5.5" width="4" height="3" fill="#fff" stroke="#2B2B2B" stroke-width="1"/><rect x="9.5" y="10.5" width="4" height="3" fill="#fff" stroke="#2B2B2B" stroke-width="1"/></g></svg>
<div class="t" style="left:100.40px;top:499px;line-height:16px;height:16px;letter-spacing:-0.450px;">Get Rect</div>
<svg style="left:79px;top:517px" width="16" height="16" viewBox="0 0 16 16"><g shape-rendering="crispEdges"><rect x="0.5" y="0.5" width="15" height="15" fill="#fff" stroke="#2B2B2B" stroke-width="1"/><rect x="1" y="1" width="14" height="2" fill="#5FE35F"/><rect x="1" y="1" width="14" height="1" fill="#8BF28B"/><rect x="1" y="3" width="14" height="1" fill="#2B2B2B"/><rect x="2.5" y="5.5" width="4" height="3" fill="#fff" stroke="#2B2B2B" stroke-width="1"/><rect x="2.5" y="10.5" width="4" height="3" fill="#fff" stroke="#2B2B2B" stroke-width="1"/><rect x="9.5" y="5.5" width="4" height="3" fill="#fff" stroke="#2B2B2B" stroke-width="1"/><rect x="9.5" y="10.5" width="4" height="3" fill="#fff" stroke="#2B2B2B" stroke-width="1"/></g></svg>
<div class="t" style="left:100.40px;top:518px;line-height:16px;height:16px;letter-spacing:-0.450px;">Get Size</div>
<svg style="left:79px;top:536px" width="16" height="16" viewBox="0 0 16 16"><g shape-rendering="crispEdges"><rect x="0.5" y="0.5" width="15" height="15" fill="#fff" stroke="#2B2B2B" stroke-width="1"/><rect x="1" y="1" width="14" height="2" fill="#5FE35F"/><rect x="1" y="1" width="14" height="1" fill="#8BF28B"/><rect x="1" y="3" width="14" height="1" fill="#2B2B2B"/><rect x="2.5" y="5.5" width="4" height="3" fill="#fff" stroke="#2B2B2B" stroke-width="1"/><rect x="2.5" y="10.5" width="4" height="3" fill="#fff" stroke="#2B2B2B" stroke-width="1"/><rect x="9.5" y="5.5" width="4" height="3" fill="#fff" stroke="#2B2B2B" stroke-width="1"/><rect x="9.5" y="10.5" width="4" height="3" fill="#fff" stroke="#2B2B2B" stroke-width="1"/></g></svg>
<div class="t" style="left:100.40px;top:537px;line-height:16px;height:16px;letter-spacing:-0.278px;">Get Tag Name</div>
<svg style="left:79px;top:555px" width="16" height="16" viewBox="0 0 16 16"><g shape-rendering="crispEdges"><rect x="0.5" y="0.5" width="15" height="15" fill="#fff" stroke="#2B2B2B" stroke-width="1"/><rect x="1" y="1" width="14" height="2" fill="#5FE35F"/><rect x="1" y="1" width="14" height="1" fill="#8BF28B"/><rect x="1" y="3" width="14" height="1" fill="#2B2B2B"/><rect x="2.5" y="5.5" width="4" height="3" fill="#fff" stroke="#2B2B2B" stroke-width="1"/><rect x="2.5" y="10.5" width="4" height="3" fill="#fff" stroke="#2B2B2B" stroke-width="1"/><rect x="9.5" y="5.5" width="4" height="3" fill="#fff" stroke="#2B2B2B" stroke-width="1"/><rect x="9.5" y="10.5" width="4" height="3" fill="#fff" stroke="#2B2B2B" stroke-width="1"/></g></svg>
<div class="t" style="left:100.40px;top:556px;line-height:16px;height:16px;letter-spacing:-0.450px;">Get Text</div>
<svg style="left:79px;top:574px" width="16" height="16" viewBox="0 0 16 16"><g shape-rendering="crispEdges"><rect x="0.5" y="0.5" width="15" height="15" fill="#fff" stroke="#2B2B2B" stroke-width="1"/><rect x="1" y="1" width="14" height="2" fill="#5FE35F"/><rect x="1" y="1" width="14" height="1" fill="#8BF28B"/><rect x="1" y="3" width="14" height="1" fill="#2B2B2B"/><rect x="2.5" y="5.5" width="4" height="3" fill="#fff" stroke="#2B2B2B" stroke-width="1"/><rect x="2.5" y="10.5" width="4" height="3" fill="#fff" stroke="#2B2B2B" stroke-width="1"/><rect x="9.5" y="5.5" width="4" height="3" fill="#fff" stroke="#2B2B2B" stroke-width="1"/><rect x="9.5" y="10.5" width="4" height="3" fill="#fff" stroke="#2B2B2B" stroke-width="1"/></g></svg>
<div class="t" style="left:99.89px;top:575px;line-height:16px;height:16px;letter-spacing:-0.328px;">Is Checked</div>
<svg style="left:79px;top:593px" width="16" height="16" viewBox="0 0 16 16"><g shape-rendering="crispEdges"><rect x="0.5" y="0.5" width="15" height="15" fill="#fff" stroke="#2B2B2B" stroke-width="1"/><rect x="1" y="1" width="14" height="2" fill="#5FE35F"/><rect x="1" y="1" width="14" height="1" fill="#8BF28B"/><rect x="1" y="3" width="14" height="1" fill="#2B2B2B"/><rect x="2.5" y="5.5" width="4" height="3" fill="#fff" stroke="#2B2B2B" stroke-width="1"/><rect x="2.5" y="10.5" width="4" height="3" fill="#fff" stroke="#2B2B2B" stroke-width="1"/><rect x="9.5" y="5.5" width="4" height="3" fill="#fff" stroke="#2B2B2B" stroke-width="1"/><rect x="9.5" y="10.5" width="4" height="3" fill="#fff" stroke="#2B2B2B" stroke-width="1"/></g></svg>
<div class="t" style="left:99.89px;top:594px;line-height:16px;height:16px;letter-spacing:-0.307px;">Is Displayed</div>
<svg style="left:79px;top:612px" width="16" height="16" viewBox="0 0 16 16"><g shape-rendering="crispEdges"><rect x="0.5" y="0.5" width="15" height="15" fill="#fff" stroke="#2B2B2B" stroke-width="1"/><rect x="1" y="1" width="14" height="2" fill="#5FE35F"/><rect x="1" y="1" width="14" height="1" fill="#8BF28B"/><rect x="1" y="3" width="14" height="1" fill="#2B2B2B"/><rect x="2.5" y="5.5" width="4" height="3" fill="#fff" stroke="#2B2B2B" stroke-width="1"/><rect x="2.5" y="10.5" width="4" height="3" fill="#fff" stroke="#2B2B2B" stroke-width="1"/><rect x="9.5" y="5.5" width="4" height="3" fill="#fff" stroke="#2B2B2B" stroke-width="1"/><rect x="9.5" y="10.5" width="4" height="3" fill="#fff" stroke="#2B2B2B" stroke-width="1"/></g></svg>
<div class="t" style="left:99.89px;top:613px;line-height:16px;height:16px;letter-spacing:-0.447px;">Is Enabled</div>
<svg style="left:79px;top:631px" width="16" height="16" viewBox="0 0 16 16"><g shape-rendering="crispEdges"><rect x="0.5" y="0.5" width="15" height="15" fill="#fff" stroke="#2B2B2B" stroke-width="1"/><rect x="1" y="1" width="14" height="2" fill="#5FE35F"/><rect x="1" y="1" width="14" height="1" fill="#8BF28B"/><rect x="1" y="3" width="14" height="1" fill="#2B2B2B"/><rect x="2.5" y="5.5" width="4" height="3" fill="#fff" stroke="#2B2B2B" stroke-width="1"/><rect x="2.5" y="10.5" width="4" height="3" fill="#fff" stroke="#2B2B2B" stroke-width="1"/><rect x="9.5" y="5.5" width="4" height="3" fill="#fff" stroke="#2B2B2B" stroke-width="1"/><rect x="9.5" y="10.5" width="4" height="3" fill="#fff" stroke="#2B2B2B" stroke-width="1"/></g></svg>
<div class="t" style="left:99.89px;top:632px;line-height:16px;height:16px;letter-spacing:-0.450px;">Is Selected</div>
<svg style="left:69px;top:653.5px" width="7" height="10" viewBox="0 0 7 10"><path d="M0.6 0.8 L4.8 4.6 L0.6 8.4 Z" fill="#fff" stroke="#A0A0A0" stroke-width="1"/></svg>
<svg style="left:79px;top:650px" width="16" height="16" viewBox="0 0 16 16"><g shape-rendering="crispEdges"><rect x="0.5" y="0.5" width="15" height="15" fill="#fff" stroke="#2B2B2B" stroke-width="1"/><rect x="1" y="1" width="14" height="2" fill="#5FE35F"/><rect x="1" y="1" width="14" height="1" fill="#8BF28B"/><rect x="1" y="3" width="14" height="1" fill="#2B2B2B"/><rect x="2.5" y="5.5" width="4" height="3" fill="#fff" stroke="#2B2B2B" stroke-width="1"/><rect x="2.5" y="10.5" width="4" height="3" fill="#fff" stroke="#2B2B2B" stroke-width="1"/><rect x="9.5" y="5.5" width="4" height="3" fill="#fff" stroke="#2B2B2B" stroke-width="1"/><rect x="9.5" y="10.5" width="4" height="3" fill="#fff" stroke="#2B2B2B" stroke-width="1"/></g></svg>
<div class="t" style="left:100.46px;top:651px;line-height:16px;height:16px;letter-spacing:-0.450px;">Send Keys</div>
<svg style="left:79px;top:669px" width="16" height="16" viewBox="0 0 16 16"><g shape-rendering="crispEdges"><rect x="0.5" y="0.5" width="15" height="15" fill="#fff" stroke="#2B2B2B" stroke-width="1"/><rect x="1" y="1" width="14" height="2" fill="#5FE35F"/><rect x="1" y="1" width="14" height="1" fill="#8BF28B"/><rect x="1" y="3" width="14" height="1" fill="#2B2B2B"/><rect x="2.5" y="5.5" width="4" height="3" fill="#fff" stroke="#2B2B2B" stroke-width="1"/><rect x="2.5" y="10.5" width="4" height="3" fill="#fff" stroke="#2B2B2B" stroke-width="1"/><rect x="9.5" y="5.5" width="4" height="3" fill="#fff" stroke="#2B2B2B" stroke-width="1"/><rect x="9.5" y="10.5" width="4" height="3" fill="#fff" stroke="#2B2B2B" stroke-width="1"/></g></svg>
<div class="t" style="left:100.46px;top:670px;line-height:16px;height:16px;letter-spacing:-0.168px;">Scroll Element into View</div>
<svg style="left:79px;top:688px" width="16" height="16" viewBox="0 0 16 16"><g shape-rendering="crispEdges"><rect x="0.5" y="0.5" width="15" height="15" fill="#fff" stroke="#2B2B2B" stroke-width="1"/><rect x="1" y="1" width="14" height="2" fill="#5FE35F"/><rect x="1" y="1" width="14" height="1" fill="#8BF28B"/><rect x="1" y="3" width="14" height="1" fill="#2B2B2B"/><rect x="2.5" y="5.5" width="4" height="3" fill="#fff" stroke="#2B2B2B" stroke-width="1"/><rect x="2.5" y="10.5" width="4" height="3" fill="#fff" stroke="#2B2B2B" stroke-width="1"/><rect x="9.5" y="5.5" width="4" height="3" fill="#fff" stroke="#2B2B2B" stroke-width="1"/><rect x="9.5" y="10.5" width="4" height="3" fill="#fff" stroke="#2B2B2B" stroke-width="1"/></g></svg>
<div class="t" style="left:100.46px;top:689px;line-height:16px;height:16px;letter-spacing:-0.165px;">Switch to Frame</div>
<svg style="left:79px;top:707px" width="16" height="16" viewBox="0 0 16 16"><g shape-rendering="crispEdges"><rect x="0.5" y="0.5" width="15" height="15" fill="#fff" stroke="#2B2B2B" stroke-width="1"/><rect x="1" y="1" width="14" height="2" fill="#5FE35F"/><rect x="1" y="1" width="14" height="1" fill="#8BF28B"/><rect x="1" y="3" width="14" height="1" fill="#2B2B2B"/><rect x="2.5" y="5.5" width="4" height="3" fill="#fff" stroke="#2B2B2B" stroke-width="1"/><rect x="2.5" y="10.5" width="4" height="3" fill="#fff" stroke="#2B2B2B" stroke-width="1"/><rect x="9.5" y="5.5" width="4" height="3" fill="#fff" stroke="#2B2B2B" stroke-width="1"/><rect x="9.5" y="10.5" width="4" height="3" fill="#fff" stroke="#2B2B2B" stroke-width="1"/></g></svg>
<div class="t" style="left:100.02px;top:708px;line-height:16px;height:16px;letter-spacing:-0.036px;">Default with Element</div>
<svg style="left:69px;top:729.5px" width="7" height="10" viewBox="0 0 7 10"><path d="M0.6 0.8 L4.8 4.6 L0.6 8.4 Z" fill="#fff" stroke="#A0A0A0" stroke-width="1"/></svg>
<svg style="left:79px;top:728px" width="14" height="12" viewBox="0 0 14 12"><path d="M0.5 10.5 V1.6 Q0.5 0.5 1.6 0.5 H5.4 Q6.4 0.5 6.7 1.5 L7 2.5 H12.4 Q13.5 2.5 13.5 3.6 V10.4 Q13.5 11.5 12.4 11.5 H1.6 Q0.5 11.5 0.5 10.5 Z" fill="#84EE84" stroke="#3CB63C" stroke-width="1"/><path d="M1.2 3.6 H12.8 V7 H1.2 Z" fill="#A6FFA6"/><path d="M1.6 1.5 H5.6" stroke="#E4FFE4" stroke-width="1"/><path d="M1.2 3.5 H12.8" stroke="#D8FFD8" stroke-width="1"/></svg>
<div class="t" style="left:100.95px;top:727px;line-height:16px;height:16px;letter-spacing:-0.391px;">WebElements</div>
<svg style="left:69px;top:748.5px" width="7" height="10" viewBox="0 0 7 10"><path d="M0.6 0.8 L4.8 4.6 L0.6 8.4 Z" fill="#fff" stroke="#A0A0A0" stroke-width="1"/></svg>
<svg style="left:79px;top:747px" width="14" height="12" viewBox="0 0 14 12"><path d="M0.5 10.5 V1.6 Q0.5 0.5 1.6 0.5 H5.4 Q6.4 0.5 6.7 1.5 L7 2.5 H12.4 Q13.5 2.5 13.5 3.6 V10.4 Q13.5 11.5 12.4 11.5 H1.6 Q0.5 11.5 0.5 10.5 Z" fill="#84EE84" stroke="#3CB63C" stroke-width="1"/><path d="M1.2 3.6 H12.8 V7 H1.2 Z" fill="#A6FFA6"/><path d="M1.6 1.5 H5.6" stroke="#E4FFE4" stroke-width="1"/><path d="M1.2 3.5 H12.8" stroke="#D8FFD8" stroke-width="1"/></svg>
<div class="t" style="left:100.46px;top:746px;line-height:16px;height:16px;letter-spacing:-0.450px;">Select</div>
<svg style="left:53px;top:767.5px" width="7" height="10" viewBox="0 0 7 10"><path d="M0.6 0.8 L4.8 4.6 L0.6 8.4 Z" fill="#fff" stroke="#A0A0A0" stroke-width="1"/></svg>
<svg style="left:63px;top:766px" width="14" height="12" viewBox="0 0 14 12"><path d="M0.5 10.5 V1.6 Q0.5 0.5 1.6 0.5 H5.4 Q6.4 0.5 6.7 1.5 L7 2.5 H12.4 Q13.5 2.5 13.5 3.6 V10.4 Q13.5 11.5 12.4 11.5 H1.6 Q0.5 11.5 0.5 10.5 Z" fill="#84EE84" stroke="#3CB63C" stroke-width="1"/><path d="M1.2 3.6 H12.8 V7 H1.2 Z" fill="#A6FFA6"/><path d="M1.6 1.5 H5.6" stroke="#E4FFE4" stroke-width="1"/><path d="M1.2 3.5 H12.8" stroke="#D8FFD8" stroke-width="1"/></svg>
<div class="t" style="left:84.85px;top:765px;line-height:16px;height:16px;letter-spacing:-0.397px;">Wait For</div>
<svg style="left:53px;top:786.5px" width="7" height="10" viewBox="0 0 7 10"><path d="M0.6 0.8 L4.8 4.6 L0.6 8.4 Z" fill="#fff" stroke="#A0A0A0" stroke-width="1"/></svg>
<svg style="left:63px;top:785px" width="14" height="12" viewBox="0 0 14 12"><path d="M0.5 10.5 V1.6 Q0.5 0.5 1.6 0.5 H5.4 Q6.4 0.5 6.7 1.5 L7 2.5 H12.4 Q13.5 2.5 13.5 3.6 V10.4 Q13.5 11.5 12.4 11.5 H1.6 Q0.5 11.5 0.5 10.5 Z" fill="#84EE84" stroke="#3CB63C" stroke-width="1"/><path d="M1.2 3.6 H12.8 V7 H1.2 Z" fill="#A6FFA6"/><path d="M1.6 1.5 H5.6" stroke="#E4FFE4" stroke-width="1"/><path d="M1.2 3.5 H12.8" stroke="#D8FFD8" stroke-width="1"/></svg>
<div class="t" style="left:84.49px;top:784px;line-height:16px;height:16px;letter-spacing:-0.202px;">Complex</div>
<svg style="left:53px;top:805.5px" width="7" height="10" viewBox="0 0 7 10"><path d="M0.6 0.8 L4.8 4.6 L0.6 8.4 Z" fill="#fff" stroke="#A0A0A0" stroke-width="1"/></svg>
<svg style="left:63px;top:804px" width="14" height="12" viewBox="0 0 14 12"><path d="M0.5 10.5 V1.6 Q0.5 0.5 1.6 0.5 H5.4 Q6.4 0.5 6.7 1.5 L7 2.5 H12.4 Q13.5 2.5 13.5 3.6 V10.4 Q13.5 11.5 12.4 11.5 H1.6 Q0.5 11.5 0.5 10.5 Z" fill="#84EE84" stroke="#3CB63C" stroke-width="1"/><path d="M1.2 3.6 H12.8 V7 H1.2 Z" fill="#A6FFA6"/><path d="M1.6 1.5 H5.6" stroke="#E4FFE4" stroke-width="1"/><path d="M1.2 3.5 H12.8" stroke="#D8FFD8" stroke-width="1"/></svg>
<div class="t" style="left:83.99px;top:803px;line-height:16px;height:16px;letter-spacing:0.211px;">Implementation</div>
<div style="left:13px;top:820px;width:454px;height:19px;background:#66B2FF;border-top:1px solid #000;border-bottom:1px solid #000;"></div>
<svg style="left:31px;top:820px" width="16" height="16" viewBox="0 0 16 16"><g shape-rendering="crispEdges"><rect x="0.5" y="0.5" width="15" height="15" fill="#fff" stroke="#2B2B2B" stroke-width="1"/><rect x="1" y="1" width="14" height="2" fill="#A4B2DA"/><rect x="1" y="1" width="14" height="1" fill="#8090C4"/><rect x="1" y="3" width="14" height="1" fill="#2B2B2B"/><rect x="2.5" y="5.5" width="4" height="3" fill="#fff" stroke="#2B2B2B" stroke-width="1"/><rect x="2.5" y="10.5" width="4" height="3" fill="#fff" stroke="#2B2B2B" stroke-width="1"/><rect x="9.5" y="5.5" width="4" height="3" fill="#fff" stroke="#2B2B2B" stroke-width="1"/><rect x="9.5" y="10.5" width="4" height="3" fill="#fff" stroke="#2B2B2B" stroke-width="1"/></g></svg>
<div class="t" style="left:51.67px;top:822px;line-height:16px;height:16px;letter-spacing:-0.385px;font-weight:bold;color:#fff;">! Login</div>
<div style="left:471px;top:115px;width:10px;height:66px;background:#F0F0F0;border:1px solid #fff;border-right-color:#8C8C8C;border-bottom-color:#8C8C8C;"></div>
<svg style="left:472px;top:117px" width="8" height="9" viewBox="0 0 8 9"><path d="M5.4 0.8 V8.4 L0.8 4.6 Z" fill="#000"/></svg>
<svg style="left:472px;top:170px" width="8" height="9" viewBox="0 0 8 9"><path d="M5.4 1.2 V8.6 L0.8 4.9 Z" fill="#000"/></svg>
<svg style="left:472px;top:127px" width="8" height="46" viewBox="0 0 8 46"><path d="M4.9 0.8 V2.5 H3.2 Q4.6 2.2 4.9 0.8 Z" fill="#2A2A2A" stroke="#2A2A2A" stroke-width="0.5"/><path d="M3 3.4 H5.6" stroke="#fff" stroke-width="0.8"/><path d="M4.9 5.8 V7.5 H3.2 Q4.6 7.2 4.9 5.8 Z" fill="#2A2A2A" stroke="#2A2A2A" stroke-width="0.5"/><path d="M3 8.4 H5.6" stroke="#fff" stroke-width="0.8"/><path d="M4.9 10.8 V12.5 H3.2 Q4.6 12.2 4.9 10.8 Z" fill="#2A2A2A" stroke="#2A2A2A" stroke-width="0.5"/><path d="M3 13.4 H5.6" stroke="#fff" stroke-width="0.8"/><path d="M4.9 15.8 V17.5 H3.2 Q4.6 17.2 4.9 15.8 Z" fill="#2A2A2A" stroke="#2A2A2A" stroke-width="0.5"/><path d="M3 18.4 H5.6" stroke="#fff" stroke-width="0.8"/><path d="M4.9 20.8 V22.5 H3.2 Q4.6 22.2 4.9 20.8 Z" fill="#2A2A2A" stroke="#2A2A2A" stroke-width="0.5"/><path d="M3 23.4 H5.6" stroke="#fff" stroke-width="0.8"/><path d="M4.9 25.8 V27.5 H3.2 Q4.6 27.2 4.9 25.8 Z" fill="#2A2A2A" stroke="#2A2A2A" stroke-width="0.5"/><path d="M3 28.4 H5.6" stroke="#fff" stroke-width="0.8"/><path d="M4.9 30.8 V32.5 H3.2 Q4.6 32.2 4.9 30.8 Z" fill="#2A2A2A" stroke="#2A2A2A" stroke-width="0.5"/><path d="M3 33.4 H5.6" stroke="#fff" stroke-width="0.8"/><path d="M4.9 35.8 V37.5 H3.2 Q4.6 37.2 4.9 35.8 Z" fill="#2A2A2A" stroke="#2A2A2A" stroke-width="0.5"/><path d="M3 38.4 H5.6" stroke="#fff" stroke-width="0.8"/><path d="M4.9 40.8 V42.5 H3.2 Q4.6 42.2 4.9 40.8 Z" fill="#2A2A2A" stroke="#2A2A2A" stroke-width="0.5"/><path d="M3 43.4 H5.6" stroke="#fff" stroke-width="0.8"/></svg>
<div style="left:1566px;top:112px;width:1px;height:893px;background:#909090;"></div>
<div style="left:482px;top:138px;width:1083px;height:836px;border:1px solid #707070;box-shadow:inset 1px 1px 0 #fff;"></div>
<div class="tab" style="left:485px;top:118px;width:114px;height:21px;"></div>
<div class="t" style="left:521.64px;top:120px;line-height:16px;height:16px;letter-spacing:-0.450px;">Schema</div>
<div class="tab" style="left:726px;top:118px;width:180px;height:21px;"></div>
<div class="t" style="left:761.45px;top:120px;line-height:16px;height:16px;letter-spacing:0.007px;">Variablenumgebung</div>
<div class="tab" style="left:906px;top:118px;width:148px;height:21px;"></div>
<div class="t" style="left:942.82px;top:120px;line-height:16px;height:16px;letter-spacing:0.061px;">Betriebsmittel</div>
<div class="tab" style="left:1054px;top:118px;width:114px;height:21px;"></div>
<div class="t" style="left:1089.52px;top:120px;line-height:16px;height:16px;letter-spacing:0.120px;">Historie</div>
<div class="tab" style="left:1168px;top:118px;width:157px;height:21px;"></div>
<div class="t" style="left:1204.82px;top:120px;line-height:16px;height:16px;letter-spacing:0.204px;">Dokumentation</div>
<div class="tab" style="left:1325px;top:118px;width:133px;height:21px;"></div>
<div class="t" style="left:1362.53px;top:120px;line-height:16px;height:16px;letter-spacing:-0.064px;">Test/Demo</div>
<div class="tab" style="left:1458px;top:118px;width:104px;height:21px;"></div>
<div class="t" style="left:1498.02px;top:120px;line-height:16px;height:16px;letter-spacing:-0.130px;">Lauf</div>
<div style="left:599px;top:118px;width:127px;height:22px;background:#F0F0F0;box-shadow:inset 1px 0 0 #FAFAFA;"></div>
<div class="sel" style="left:599px;top:115px;width:127px;height:3px;"></div>
<div style="left:598px;top:116px;width:1px;height:2px;background:#FF8A1F;"></div>
<div style="left:600px;top:118px;width:126px;height:1px;background:#EEF0FA;"></div>
<div class="t" style="left:637.82px;top:119px;line-height:16px;height:16px;letter-spacing:-0.149px;">Netzwerk</div>
<div style="left:484px;top:141px;width:1078px;height:1px;background:#fff;"></div>
<div style="left:1562px;top:141px;width:1px;height:60px;background:#909090;"></div>
<div style="left:484px;top:141px;width:1px;height:60px;background:#FAFAFA;"></div>
<div style="left:484px;top:170px;width:1079px;height:1px;background:#909090;"></div>
<div style="left:484px;top:171px;width:1078px;height:1px;background:#fff;"></div>
<div style="left:519px;top:142px;width:1px;height:28px;background:#A0A0A0;"></div>
<div style="left:520px;top:142px;width:1px;height:28px;background:#fff;"></div>
<div style="left:1403px;top:142px;width:1px;height:28px;background:#A0A0A0;"></div>
<div style="left:1404px;top:142px;width:1px;height:28px;background:#fff;"></div>
<div style="left:1530px;top:142px;width:1px;height:28px;background:#A0A0A0;"></div>
<div style="left:1531px;top:142px;width:1px;height:28px;background:#fff;"></div>
<div style="left:484px;top:200px;width:1079px;height:1px;background:#909090;"></div>
<div style="left:484px;top:201px;width:1079px;height:1px;background:#fff;"></div>
<div style="left:662px;top:172px;width:1px;height:28px;background:#A0A0A0;"></div>
<div style="left:663px;top:172px;width:1px;height:28px;background:#fff;"></div>
<div style="left:701px;top:172px;width:1px;height:28px;background:#A0A0A0;"></div>
<div style="left:702px;top:172px;width:1px;height:28px;background:#fff;"></div>
<div style="left:795px;top:172px;width:1px;height:28px;background:#A0A0A0;"></div>
<div style="left:796px;top:172px;width:1px;height:28px;background:#fff;"></div>
<div style="left:890px;top:172px;width:1px;height:28px;background:#A0A0A0;"></div>
<div style="left:891px;top:172px;width:1px;height:28px;background:#fff;"></div>
<div style="left:1012px;top:172px;width:1px;height:28px;background:#A0A0A0;"></div>
<div style="left:1013px;top:172px;width:1px;height:28px;background:#fff;"></div>
<div style="left:1134px;top:172px;width:1px;height:28px;background:#A0A0A0;"></div>
<div style="left:1135px;top:172px;width:1px;height:28px;background:#fff;"></div>
<div style="left:1200px;top:172px;width:1px;height:28px;background:#A0A0A0;"></div>
<div style="left:1201px;top:172px;width:1px;height:28px;background:#fff;"></div>
<div style="left:1500px;top:144px;width:23px;height:23px;background:#CCE4FF;border-left:1px solid #808080;border-top:1px solid #808080;"></div>
<div style="left:484px;top:202px;width:1080px;height:771px;background:#fff;border-left:1px solid #8A8A8A;border-top:1px solid #8A8A8A;"></div>
<div style="left:1545px;top:203px;width:17px;height:768px;background:#F0F0F0;"></div>
<div style="left:1547px;top:300px;width:14px;height:596px;background:#CDCDCD;"></div>
<svg style="left:1550px;top:208px" width="8" height="5" viewBox="0 0 8 5"><path d="M0.3 4.6 L4 0.9 L7.7 4.6 Z" fill="#505050"/></svg>
<svg style="left:1550px;top:943px" width="8" height="5" viewBox="0 0 8 5"><path d="M0.3 0.4 L4 4.1 L7.7 0.4 Z" fill="#505050"/></svg>
<div style="left:485px;top:954px;width:1077px;height:17px;background:#F0F0F0;"></div>
<div style="left:503px;top:956px;width:896px;height:14px;background:#CDCDCD;"></div>
<svg style="left:490px;top:959px" width="6" height="9" viewBox="0 0 6 9"><path d="M5 0.6 L1 4.4 L5 8.2 Z" fill="#404040"/></svg>
<svg style="left:1533px;top:959px" width="6" height="9" viewBox="0 0 6 9"><path d="M1 0.6 L5 4.4 L1 8.2 Z" fill="#404040"/></svg>
<div style="left:925px;top:203px;width:144px;height:84px;background:#ECEFF2;border:1px solid #000;border-top:none;"></div>
<div style="left:926px;top:203px;width:142px;height:8px;background:#657F93;border-bottom:1px solid #000;"></div>
<div class="t" style="left:928.14px;top:216px;line-height:16px;height:16px;letter-spacing:-0.397px;font-size:11.5px;">name</div>
<div style="left:920px;top:223px;width:5px;height:1px;background:#A8A8A8;"></div>
<div style="left:915px;top:221px;width:5px;height:5px;background:#A8A8A8;"></div>
<div style="left:826px;top:216px;width:89px;height:15px;border:1px solid #000;background:#fff;"></div>
<div class="t" style="left:831.53px;top:216px;line-height:16px;height:16px;letter-spacing:0.147px;font-size:11.5px;color:#FF00FF;">testConnection</div>
<div class="t" style="left:928.58px;top:232px;line-height:16px;height:16px;letter-spacing:-0.450px;font-size:11.5px;">startURL</div>
<div style="left:920px;top:239px;width:5px;height:1px;background:#A8A8A8;"></div>
<div style="left:915px;top:237px;width:5px;height:5px;background:#A8A8A8;"></div>
<div style="left:733px;top:232px;width:182px;height:15px;border:1px solid #000;background:#fff;"></div>
<div class="t" style="left:738.40px;top:232px;line-height:16px;height:16px;letter-spacing:0.049px;font-size:11.5px;color:#FF00FF;">http://expeccoalm-demo.exept.de</div>
<div class="t" style="left:928.16px;top:248px;line-height:16px;height:16px;letter-spacing:-0.182px;font-size:11.5px;">browserType</div>
<div style="left:920px;top:255px;width:5px;height:1px;background:#A8A8A8;"></div>
<div style="left:915px;top:253px;width:5px;height:5px;background:#A8A8A8;"></div>
<div style="left:872px;top:248px;width:43px;height:15px;border:1px solid #000;background:#fff;"></div>
<div class="t" style="left:877.54px;top:248px;line-height:16px;height:16px;letter-spacing:0.112px;font-size:11.5px;color:#FF00FF;">firefox</div>
<div class="t" style="left:1008.61px;top:216px;line-height:16px;height:16px;letter-spacing:0.212px;font-size:11.5px;">connection</div>
<div style="left:1069px;top:223px;width:6px;height:1px;background:#000;"></div>
<div style="left:1074px;top:221px;width:5px;height:5px;background:#fff;border:1px solid #000;"></div>
<div style="left:949px;top:287px;width:1px;height:11px;background:#000;"></div>
<div style="left:947px;top:294px;width:5px;height:1px;background:#000;"></div>
<div style="left:948px;top:295px;width:3px;height:1px;background:#000;"></div>
<div style="left:949px;top:299px;width:1px;height:33px;background:repeating-linear-gradient(#000 0,#000 1px,#fff 1px,#fff 2px);"></div>
<div style="left:949px;top:333px;width:1px;height:10px;background:#000;"></div>
<div style="left:947px;top:341px;width:5px;height:1px;background:#000;"></div>
<div style="left:948px;top:342px;width:3px;height:1px;background:#000;"></div>
<div style="left:925px;top:343px;width:64px;height:96px;background:#ECEFF2;border:1px solid #000;"></div>
<div style="left:926px;top:344px;width:62px;height:27px;background:#657F93;border-bottom:1px solid #000;"></div>
<div class="t" style="left:931.44px;top:350px;line-height:16px;height:16px;letter-spacing:-0.450px;font-size:11.5px;color:#fff;">Send Keys</div>
<div class="t" style="left:928.13px;top:376px;line-height:16px;height:16px;letter-spacing:0.158px;font-size:11.5px;">locator</div>
<div style="left:920px;top:383px;width:5px;height:1px;background:#A8A8A8;"></div>
<div style="left:915px;top:381px;width:5px;height:5px;background:#A8A8A8;"></div>
<div style="left:487px;top:376px;width:428px;height:15px;border:1px solid #000;background:#fff;"></div>
<div class="t" style="left:491.30px;top:376px;line-height:16px;height:16px;font-size:11.5px;color:#FF00FF;"><span style="letter-spacing:0.168px;">//body/div[@class=</span><span style="margin-left:0.48px;letter-spacing:-0.144px;">&quot;pageContentDiv&quot;</span><span style="margin-left:1.17px;letter-spacing:-0.169px;">]/div...hSmallX</span><span style="margin-left:0.24px;letter-spacing:0.351px;">&quot;]/table/tbody/tr/td[1]/div/input</span></div>
<div class="t" style="left:928.13px;top:392px;line-height:16px;height:16px;letter-spacing:-0.450px;font-size:11.5px;">keys</div>
<div style="left:920px;top:399px;width:5px;height:1px;background:#A8A8A8;"></div>
<div style="left:915px;top:397px;width:5px;height:5px;background:#A8A8A8;"></div>
<div style="left:832px;top:392px;width:83px;height:15px;border:1px solid #000;background:#fff;"></div>
<div class="t" style="left:837.44px;top:392px;line-height:16px;height:16px;letter-spacing:-0.118px;font-size:11.5px;color:#FF00FF;">mmustermann</div>
<div class="t" style="left:928.73px;top:408px;line-height:16px;height:16px;letter-spacing:0.124px;font-size:11.5px;">timeout</div>
<div style="left:920px;top:415px;width:5px;height:1px;background:#000;"></div>
<div style="left:915px;top:413px;width:5px;height:5px;background:#000;"></div>
<div style="left:949px;top:439px;width:1px;height:11px;background:#000;"></div>
<div style="left:947px;top:446px;width:5px;height:1px;background:#000;"></div>
<div style="left:948px;top:447px;width:3px;height:1px;background:#000;"></div>
<div style="left:949px;top:451px;width:1px;height:19px;background:repeating-linear-gradient(#000 0,#000 1px,#fff 1px,#fff 2px);"></div>
<div style="left:949px;top:472px;width:1px;height:10px;background:#000;"></div>
<div style="left:947px;top:480px;width:5px;height:1px;background:#000;"></div>
<div style="left:948px;top:481px;width:3px;height:1px;background:#000;"></div>
<div style="left:925px;top:482px;width:64px;height:96px;background:#ECEFF2;border:1px solid #000;"></div>
<div style="left:926px;top:483px;width:62px;height:27px;background:#657F93;border-bottom:1px solid #000;"></div>
<div class="t" style="left:931.44px;top:489px;line-height:16px;height:16px;letter-spacing:-0.450px;font-size:11.5px;color:#fff;">Send Keys</div>
<div class="t" style="left:928.13px;top:512px;line-height:16px;height:16px;letter-spacing:0.158px;font-size:11.5px;">locator</div>
<div style="left:920px;top:519px;width:5px;height:1px;background:#A8A8A8;"></div>
<div style="left:915px;top:517px;width:5px;height:5px;background:#A8A8A8;"></div>
<div style="left:487px;top:512px;width:428px;height:15px;border:1px solid #000;background:#fff;"></div>
<div class="t" style="left:491.30px;top:512px;line-height:16px;height:16px;font-size:11.5px;color:#FF00FF;"><span style="letter-spacing:0.168px;">//body/div[@class=</span><span style="margin-left:0.48px;letter-spacing:-0.144px;">&quot;pageContentDiv&quot;</span><span style="margin-left:1.17px;letter-spacing:-0.169px;">]/div...hSmallX</span><span style="margin-left:0.24px;letter-spacing:0.351px;">&quot;]/table/tbody/tr/td[1]/div/input</span></div>
<div class="t" style="left:928.13px;top:528px;line-height:16px;height:16px;letter-spacing:-0.450px;font-size:11.5px;">keys</div>
<div style="left:920px;top:535px;width:5px;height:1px;background:#A8A8A8;"></div>
<div style="left:915px;top:533px;width:5px;height:5px;background:#A8A8A8;"></div>
<div style="left:887px;top:528px;width:28px;height:15px;border:1px solid #000;background:#fff;"></div>
<div class="t" style="left:891.69px;top:528px;line-height:16px;height:16px;letter-spacing:-0.450px;font-size:11.5px;color:#FF00FF;">mm</div>
<div class="t" style="left:928.73px;top:544px;line-height:16px;height:16px;letter-spacing:0.124px;font-size:11.5px;">timeout</div>
<div style="left:920px;top:551px;width:5px;height:1px;background:#000;"></div>
<div style="left:915px;top:549px;width:5px;height:5px;background:#000;"></div>
<div style="left:949px;top:578px;width:1px;height:11px;background:#000;"></div>
<div style="left:947px;top:585px;width:5px;height:1px;background:#000;"></div>
<div style="left:948px;top:586px;width:3px;height:1px;background:#000;"></div>
<div style="left:949px;top:590px;width:1px;height:19px;background:repeating-linear-gradient(#000 0,#000 1px,#fff 1px,#fff 2px);"></div>
<div style="left:949px;top:611px;width:1px;height:10px;background:#000;"></div>
<div style="left:947px;top:619px;width:5px;height:1px;background:#000;"></div>
<div style="left:948px;top:620px;width:3px;height:1px;background:#000;"></div>
<div style="left:925px;top:621px;width:64px;height:80px;background:#ECEFF2;border:1px solid #000;"></div>
<div style="left:926px;top:622px;width:62px;height:27px;background:#657F93;border-bottom:1px solid #000;"></div>
<div class="t" style="left:945.62px;top:628px;line-height:16px;height:16px;letter-spacing:-0.412px;font-size:11.5px;color:#fff;">Click</div>
<div class="t" style="left:928.13px;top:656px;line-height:16px;height:16px;letter-spacing:0.158px;font-size:11.5px;">locator</div>
<div style="left:920px;top:663px;width:5px;height:1px;background:#A8A8A8;"></div>
<div style="left:915px;top:661px;width:5px;height:5px;background:#A8A8A8;"></div>
<div style="left:487px;top:656px;width:428px;height:15px;border:1px solid #000;background:#fff;"></div>
<div class="t" style="left:491.10px;top:656px;line-height:16px;height:16px;font-size:11.5px;color:#FF00FF;"><span style="letter-spacing:0.168px;">//body/div[@class=</span><span style="margin-left:0.48px;letter-spacing:-0.144px;">&quot;pageContentDiv&quot;</span><span style="margin-left:0.67px;letter-spacing:0.125px;">]/div...able/tbody/tr[5]/td[@class=</span><span style="margin-left:1.12px;letter-spacing:0.337px;">&quot;left&quot;]/input</span></div>
<div class="t" style="left:928.73px;top:672px;line-height:16px;height:16px;letter-spacing:0.124px;font-size:11.5px;">timeout</div>
<div style="left:920px;top:679px;width:5px;height:1px;background:#000;"></div>
<div style="left:915px;top:677px;width:5px;height:5px;background:#000;"></div>
<div style="left:949px;top:701px;width:1px;height:11px;background:#000;"></div>
<div style="left:947px;top:708px;width:5px;height:1px;background:#000;"></div>
<div style="left:948px;top:709px;width:3px;height:1px;background:#000;"></div>
<div style="left:949px;top:713px;width:1px;height:19px;background:repeating-linear-gradient(#000 0,#000 1px,#fff 1px,#fff 2px);"></div>
<div style="left:949px;top:733px;width:1px;height:10px;background:#000;"></div>
<div style="left:947px;top:741px;width:5px;height:1px;background:#000;"></div>
<div style="left:948px;top:742px;width:3px;height:1px;background:#000;"></div>
<div style="left:925px;top:743px;width:72px;height:80px;background:#ECEFF2;border:1px solid #000;"></div>
<div style="left:926px;top:744px;width:70px;height:27px;background:#657F93;border-bottom:1px solid #000;"></div>
<div class="t" style="left:941.18px;top:750px;line-height:16px;height:16px;letter-spacing:-0.450px;font-size:11.5px;color:#fff;">Get Text</div>
<div class="t" style="left:928.13px;top:776px;line-height:16px;height:16px;letter-spacing:0.158px;font-size:11.5px;">locator</div>
<div style="left:920px;top:783px;width:5px;height:1px;background:#A8A8A8;"></div>
<div style="left:915px;top:781px;width:5px;height:5px;background:#A8A8A8;"></div>
<div style="left:487px;top:776px;width:428px;height:15px;border:1px solid #000;background:#fff;"></div>
<div class="t" style="left:493.90px;top:776px;line-height:16px;height:16px;font-size:11.5px;color:#FF00FF;"><span style="letter-spacing:0.168px;">//body/div[@class=</span><span style="margin-left:0.48px;letter-spacing:-0.144px;">&quot;pageContentDiv&quot;</span><span style="margin-left:1.17px;letter-spacing:-0.149px;">]/div...SelectBox center</span><span style="margin-left:0.37px;letter-spacing:0.359px;">&quot;]/table/tbody/tr[1]/th</span></div>
<div class="t" style="left:928.73px;top:792px;line-height:16px;height:16px;letter-spacing:0.124px;font-size:11.5px;">timeout</div>
<div style="left:920px;top:799px;width:5px;height:1px;background:#000;"></div>
<div style="left:915px;top:797px;width:5px;height:5px;background:#000;"></div>
<div class="t" style="left:975.63px;top:776px;line-height:16px;height:16px;letter-spacing:-0.259px;font-size:11.5px;">text</div>
<div style="left:997px;top:783px;width:6px;height:1px;background:#000;"></div>
<div style="left:1002px;top:781px;width:5px;height:5px;background:#fff;border:1px solid #000;"></div>
<div style="left:1285px;top:727px;width:81px;height:89px;background:#ECEFF2;border:1px solid #000;"></div>
<div style="left:1286px;top:728px;width:79px;height:27px;background:#657F93;border-bottom:1px solid #000;"></div>
<div class="t" style="left:1288.88px;top:734px;line-height:16px;height:16px;letter-spacing:-0.269px;font-size:11.5px;color:#fff;">Assert [ Equal ]</div>
<div class="t" style="left:1288.41px;top:760px;line-height:16px;height:16px;letter-spacing:-0.149px;font-size:11.5px;">expected</div>
<div style="left:1280px;top:767px;width:5px;height:1px;background:#000;"></div>
<div style="left:1275px;top:765px;width:5px;height:5px;background:#fff;border:1px solid #000;"></div>
<div class="t" style="left:1288.41px;top:776px;line-height:16px;height:16px;letter-spacing:0.034px;font-size:11.5px;">actual</div>
<div style="left:1280px;top:783px;width:5px;height:1px;background:#000;"></div>
<div style="left:1275px;top:781px;width:5px;height:5px;background:#fff;border:1px solid #000;"></div>
<div class="t" style="left:1288.14px;top:792px;line-height:16px;height:16px;letter-spacing:-0.450px;font-size:11.5px;">message</div>
<div style="left:1280px;top:799px;width:5px;height:1px;background:#000;"></div>
<div style="left:1275px;top:797px;width:5px;height:5px;background:#000;"></div>
<div class="t" style="left:1367.85px;top:723px;line-height:20px;height:20px;letter-spacing:0.000px;font-size:16.5px;font-weight:bold;color:#FF0000;">!</div>
<div style="left:894px;top:976px;width:125px;height:22px;border:1px solid #000;background:#F0F0F0;"></div>
<div class="t" style="left:921.57px;top:979px;line-height:16px;height:16px;letter-spacing:0.037px;">Übernehmen</div>
<div style="left:1024px;top:976px;width:125px;height:22px;border:1px solid #000;background:#F0F0F0;"></div>
<div class="t" style="left:1060.45px;top:979px;line-height:16px;height:16px;letter-spacing:-0.257px;">Verwerfen</div>
<svg style="left:0;top:0" width="1575" height="1040" viewBox="0 0 1575 1040"><radialGradient id="g20" cx="0.4" cy="0.3" r="0.8"><stop offset="0" stop-color="#F6B4B4"/><stop offset="1" stop-color="#EC9A9A"/></radialGradient><circle cx="498.2" cy="155" r="7" fill="url(#g20)"/><rect x="494.6" y="153.6" width="6.6" height="2.6" rx="0.8" fill="#FDF4F4"/><path d="M503.5 155.4 V159.6 M501.4 157.5 H505.6" stroke="#A9A9A2" stroke-width="2.3" stroke-linecap="square" opacity="0.85"/><path d="M501.5 162.6 H505.5" stroke="#A9A9A2" stroke-width="2.2" stroke-linecap="square" opacity="0.85"/><path d="M503.5 155.1 V159.9 M501.1 157.5 H505.9" stroke="#FCF0A4" stroke-width="1.1"/><path d="M501.1 162.6 H505.9" stroke="#FCF0A4" stroke-width="1"/><linearGradient id="g21" x1="0" y1="0" x2="1" y2="1"><stop offset="0" stop-color="#6EDC14"/><stop offset="1" stop-color="#2C8C1C"/></linearGradient><path d="M534.4 149.4 L542.8 156 L534.4 162.8 Z" fill="url(#g21)" stroke="#2A801A" stroke-width="0.9" stroke-linejoin="round"/><linearGradient id="g22" x1="0" y1="0" x2="1" y2="1"><stop offset="0" stop-color="#58C024"/><stop offset="1" stop-color="#2C8C1C"/></linearGradient><path d="M562.4 156.4 L570.8 155.8 L570.6 157 L563.4 163 L562.4 163 Z" fill="url(#g22)" stroke="#2A801A" stroke-width="0.7" stroke-linejoin="round"/><path d="M559.4 151.4 L561.6 152.2 M560.8 149.2 L562.6 150.6 M564.6 147.6 L564.8 149.4 M569.6 152.2 L567.6 152.6 M569.4 155 L567.2 154.2" stroke="#000" stroke-width="1.1"/><circle cx="567.6" cy="149.6" r="1.7" fill="#000"/><ellipse cx="564" cy="153.2" rx="4.4" ry="3.5" transform="rotate(-38 564 153.2)" fill="#E81414" stroke="#B00000" stroke-width="0.5"/><circle cx="562.7" cy="152.2" r="0.75" fill="#fff"/><circle cx="565.2" cy="151.6" r="0.75" fill="#fff"/><circle cx="563.4" cy="154.6" r="0.75" fill="#fff"/><circle cx="565.6" cy="153.8" r="0.7" fill="#fff"/><radialGradient id="g23" cx="0.4" cy="0.35" r="0.7"><stop offset="0" stop-color="#F4FAFF"/><stop offset="1" stop-color="#BCDCFA"/></radialGradient><path d="M1421.6 157.4 L1415.8 162.79999999999998" stroke="#F0A040" stroke-width="2" stroke-linecap="round"/><path d="M1421.2 157.0 L1415.6 162.4" stroke="#F8C888" stroke-width="0.8" stroke-linecap="round"/><circle cx="1425" cy="153.6" r="4.9" fill="url(#g23)" stroke="#A8BCE4" stroke-width="1"/><path d="M1425.4 161.6 H1430.2" stroke="#000" stroke-width="1"/><radialGradient id="g24" cx="0.4" cy="0.35" r="0.7"><stop offset="0" stop-color="#F4FAFF"/><stop offset="1" stop-color="#BCDCFA"/></radialGradient><path d="M1449.6 157.4 L1443.8 162.79999999999998" stroke="#F0A040" stroke-width="2" stroke-linecap="round"/><path d="M1449.2 157.0 L1443.6 162.4" stroke="#F8C888" stroke-width="0.8" stroke-linecap="round"/><circle cx="1453" cy="153.6" r="4.9" fill="url(#g24)" stroke="#A8BCE4" stroke-width="1"/><path d="M1453.4 161.6 H1458.6 M1456 159.0 V164.2" stroke="#000" stroke-width="1"/><rect x="1475" y="148" width="16" height="16" fill="#B4BCDC"/><rect x="1476" y="149" width="2" height="2" fill="#fff"/><rect x="1476" y="152" width="2" height="2" fill="#fff"/><rect x="1476" y="155" width="2" height="2" fill="#fff"/><rect x="1476" y="158" width="2" height="2" fill="#fff"/><rect x="1476" y="161" width="2" height="2" fill="#fff"/><rect x="1479" y="149" width="2" height="2" fill="#fff"/><rect x="1479" y="152" width="2" height="2" fill="#fff"/><rect x="1479" y="155" width="2" height="2" fill="#fff"/><rect x="1479" y="158" width="2" height="2" fill="#fff"/><rect x="1479" y="161" width="2" height="2" fill="#fff"/><rect x="1482" y="149" width="2" height="2" fill="#fff"/><rect x="1482" y="152" width="2" height="2" fill="#fff"/><rect x="1482" y="155" width="2" height="2" fill="#fff"/><rect x="1482" y="158" width="2" height="2" fill="#fff"/><rect x="1482" y="161" width="2" height="2" fill="#fff"/><rect x="1485" y="149" width="2" height="2" fill="#fff"/><rect x="1485" y="152" width="2" height="2" fill="#fff"/><rect x="1485" y="155" width="2" height="2" fill="#fff"/><rect x="1485" y="158" width="2" height="2" fill="#fff"/><rect x="1485" y="161" width="2" height="2" fill="#fff"/><rect x="1488" y="149" width="2" height="2" fill="#fff"/><rect x="1488" y="152" width="2" height="2" fill="#fff"/><rect x="1488" y="155" width="2" height="2" fill="#fff"/><rect x="1488" y="158" width="2" height="2" fill="#fff"/><rect x="1488" y="161" width="2" height="2" fill="#fff"/><rect x="1504" y="149" width="16" height="16" fill="#B4BCDC"/><rect x="1505" y="150" width="2" height="2" fill="#fff"/><rect x="1505" y="153" width="2" height="2" fill="#fff"/><rect x="1505" y="156" width="2" height="2" fill="#fff"/><rect x="1505" y="159" width="2" height="2" fill="#fff"/><rect x="1505" y="162" width="2" height="2" fill="#fff"/><rect x="1508" y="150" width="2" height="2" fill="#fff"/><rect x="1508" y="153" width="2" height="2" fill="#fff"/><rect x="1508" y="156" width="2" height="2" fill="#fff"/><rect x="1508" y="159" width="2" height="2" fill="#fff"/><rect x="1508" y="162" width="2" height="2" fill="#fff"/><rect x="1511" y="150" width="2" height="2" fill="#fff"/><rect x="1511" y="153" width="2" height="2" fill="#fff"/><rect x="1511" y="156" width="2" height="2" fill="#fff"/><rect x="1511" y="159" width="2" height="2" fill="#fff"/><rect x="1511" y="162" width="2" height="2" fill="#fff"/><rect x="1514" y="150" width="2" height="2" fill="#fff"/><rect x="1514" y="153" width="2" height="2" fill="#fff"/><rect x="1514" y="156" width="2" height="2" fill="#fff"/><rect x="1514" y="159" width="2" height="2" fill="#fff"/><rect x="1514" y="162" width="2" height="2" fill="#fff"/><rect x="1517" y="150" width="2" height="2" fill="#fff"/><rect x="1517" y="153" width="2" height="2" fill="#fff"/><rect x="1517" y="156" width="2" height="2" fill="#fff"/><rect x="1517" y="159" width="2" height="2" fill="#fff"/><rect x="1517" y="162" width="2" height="2" fill="#fff"/><path d="M1507 157 L1511.2 161.4 L1519.4 153" fill="none" stroke="#10104C" stroke-width="2"/><path d="M1507.4 156.4 L1511 160" stroke="#1030C0" stroke-width="0.8"/><rect x="1541.5" y="148.5" width="14" height="11" rx="1.6" fill="#FFF000" stroke="#E89030" stroke-width="1"/><path d="M1544 151.5 H1553.4 M1544 154 H1547.4 M1548.6 154 H1553.4 M1544 156.5 H1553.4" stroke="#6A6000" stroke-width="1.2" stroke-dasharray="2.2 0.6"/><rect x="490" y="177" width="2" height="17" fill="#9C98B4"/><linearGradient id="g25" x1="0" y1="0" x2="1" y2="1"><stop offset="0" stop-color="#FFF6A0"/><stop offset="1" stop-color="#FFE050"/></linearGradient><rect x="493.5" y="178.5" width="8" height="6" fill="url(#g25)" stroke="#E8B478" stroke-width="1"/><linearGradient id="g26" x1="0" y1="0" x2="1" y2="1"><stop offset="0" stop-color="#F4F6FC"/><stop offset="1" stop-color="#C0C8E0"/></linearGradient><rect x="493.5" y="186.5" width="10" height="6" fill="url(#g26)" stroke="#A8B4D8" stroke-width="1"/><rect x="533" y="177" width="2" height="17" fill="#9C98B4"/><linearGradient id="g27" x1="0" y1="0" x2="1" y2="1"><stop offset="0" stop-color="#FFF6A0"/><stop offset="1" stop-color="#FFE050"/></linearGradient><rect x="523.5" y="178.5" width="8" height="6" fill="url(#g27)" stroke="#E8B478" stroke-width="1"/><linearGradient id="g28" x1="0" y1="0" x2="1" y2="1"><stop offset="0" stop-color="#F4F6FC"/><stop offset="1" stop-color="#C0C8E0"/></linearGradient><rect x="521.5" y="186.5" width="10" height="6" fill="url(#g28)" stroke="#A8B4D8" stroke-width="1"/><rect x="547" y="177" width="17" height="2" fill="#9C98B4"/><linearGradient id="g29" x1="0" y1="0" x2="1" y2="1"><stop offset="0" stop-color="#FFF6A0"/><stop offset="1" stop-color="#FFE050"/></linearGradient><rect x="548.5" y="180.5" width="6" height="6" fill="url(#g29)" stroke="#E8B478" stroke-width="1"/><linearGradient id="g30" x1="0" y1="0" x2="1" y2="1"><stop offset="0" stop-color="#F4F6FC"/><stop offset="1" stop-color="#C0C8E0"/></linearGradient><rect x="556.5" y="180.5" width="6" height="10" fill="url(#g30)" stroke="#A8B4D8" stroke-width="1"/><rect x="576" y="192" width="17" height="2" fill="#9C98B4"/><linearGradient id="g31" x1="0" y1="0" x2="1" y2="1"><stop offset="0" stop-color="#FFF6A0"/><stop offset="1" stop-color="#FFE050"/></linearGradient><rect x="577.5" y="184.5" width="6" height="6" fill="url(#g31)" stroke="#E8B478" stroke-width="1"/><linearGradient id="g32" x1="0" y1="0" x2="1" y2="1"><stop offset="0" stop-color="#F4F6FC"/><stop offset="1" stop-color="#C0C8E0"/></linearGradient><rect x="585.5" y="180.5" width="6" height="10" fill="url(#g32)" stroke="#A8B4D8" stroke-width="1"/><rect x="605" y="177" width="2" height="17" fill="#9C98B4"/><rect x="620" y="177" width="2" height="17" fill="#9C98B4"/><linearGradient id="g33" x1="0" y1="0" x2="1" y2="1"><stop offset="0" stop-color="#FFF6A0"/><stop offset="1" stop-color="#FFE050"/></linearGradient><rect x="608.5" y="178.5" width="10" height="6" fill="url(#g33)" stroke="#E8B478" stroke-width="1"/><linearGradient id="g34" x1="0" y1="0" x2="1" y2="1"><stop offset="0" stop-color="#F4F6FC"/><stop offset="1" stop-color="#C0C8E0"/></linearGradient><rect x="608.5" y="186.5" width="10" height="6" fill="url(#g34)" stroke="#A8B4D8" stroke-width="1"/><rect x="634" y="177" width="17" height="2" fill="#9C98B4"/><rect x="634" y="192" width="17" height="2" fill="#9C98B4"/><linearGradient id="g35" x1="0" y1="0" x2="1" y2="1"><stop offset="0" stop-color="#FFF6A0"/><stop offset="1" stop-color="#FFE050"/></linearGradient><rect x="635.5" y="180.5" width="6" height="10" fill="url(#g35)" stroke="#E8B478" stroke-width="1"/><linearGradient id="g36" x1="0" y1="0" x2="1" y2="1"><stop offset="0" stop-color="#F4F6FC"/><stop offset="1" stop-color="#C0C8E0"/></linearGradient><rect x="643.5" y="180.5" width="6" height="10" fill="url(#g36)" stroke="#A8B4D8" stroke-width="1"/><rect x="673" y="177" width="2" height="17" fill="#2C2C5C"/><rect x="688" y="177" width="2" height="17" fill="#2C2C5C"/><linearGradient id="g37" x1="0" y1="0" x2="1" y2="1"><stop offset="0" stop-color="#FFF200"/><stop offset="1" stop-color="#FFD800"/></linearGradient><rect x="676.5" y="178.5" width="10" height="6" fill="url(#g37)" stroke="#B86A10" stroke-width="1"/><linearGradient id="g38" x1="0" y1="0" x2="1" y2="1"><stop offset="0" stop-color="#B8DCFC"/><stop offset="1" stop-color="#58A0F0"/></linearGradient><rect x="676.5" y="186.5" width="10" height="6" fill="url(#g38)" stroke="#1060D0" stroke-width="1"/><radialGradient id="g39" cx="0.5" cy="0.5" r="0.5"><stop offset="0" stop-color="#FFFFFF"/><stop offset="0.35" stop-color="#FFF8C0"/><stop offset="0.7" stop-color="#FFD020"/><stop offset="1" stop-color="#F89010"/></radialGradient><polygon points="684.60,180.60 685.82,183.24 688.56,182.24 687.56,184.98 690.20,186.20 687.56,187.42 688.56,190.16 685.82,189.16 684.60,191.80 683.38,189.16 680.64,190.16 681.64,187.42 679.00,186.20 681.64,184.98 680.64,182.24 683.38,183.24" fill="url(#g39)" stroke="#F09018" stroke-width="0.5"/><path d="M712 186 H716" stroke="#8686AA" stroke-width="1.8"/><path d="M714.6 182.8 L718.2 186 L714.6 189.2 Z" fill="#8686AA"/><linearGradient id="g40" x1="0" y1="0" x2="1" y2="1"><stop offset="0" stop-color="#F6F8FC"/><stop offset="1" stop-color="#B4BCD8"/></linearGradient><rect x="719.5" y="182.5" width="7" height="7" fill="url(#g40)" stroke="#A4ACD0" stroke-width="1"/><path d="M748 178 V182" stroke="#8686AA" stroke-width="1.8"/><path d="M744.8 180.6 L748 184.2 L751.2 180.6 Z" fill="#8686AA"/><linearGradient id="g41" x1="0" y1="0" x2="1" y2="1"><stop offset="0" stop-color="#F6F8FC"/><stop offset="1" stop-color="#B4BCD8"/></linearGradient><rect x="744.5" y="185.5" width="7" height="6" fill="url(#g41)" stroke="#A4ACD0" stroke-width="1"/><path d="M768.4 179.4 L773 184 " stroke="#8686AA" stroke-width="2"/><path d="M775.2 180.6 V186.2 H769.6 Z" fill="#8686AA"/><linearGradient id="g42" x1="0" y1="0" x2="1" y2="1"><stop offset="0" stop-color="#F6F8FC"/><stop offset="1" stop-color="#B4BCD8"/></linearGradient><rect x="775.5" y="186.5" width="7" height="6" fill="url(#g42)" stroke="#A4ACD0" stroke-width="1"/><path d="M806.4 179.4 L811 184" stroke="#7464C0" stroke-width="1.8"/><path d="M813 180.8 V186 H807.8 Z" fill="#7464C0"/><linearGradient id="g43" x1="0" y1="0" x2="0.3" y2="1"><stop offset="0" stop-color="#FFFFFF"/><stop offset="1" stop-color="#A8D0FA"/></linearGradient><rect x="815.5" y="188.5" width="6" height="6" fill="url(#g43)" stroke="#74ACEE" stroke-width="1"/><linearGradient id="g44" x1="0" y1="0" x2="0.3" y2="1"><stop offset="0" stop-color="#FFFFFF"/><stop offset="1" stop-color="#A8D0FA"/></linearGradient><rect x="813.5" y="186.5" width="6" height="6" fill="url(#g44)" stroke="#74ACEE" stroke-width="1"/><path d="M819.5 177.9 V183.1 M816.9 180.5 H822.1" stroke="#505050" stroke-width="1.1"/><linearGradient id="g45" x1="0" y1="0" x2="0.3" y2="1"><stop offset="0" stop-color="#FFFFFF"/><stop offset="1" stop-color="#A8D0FA"/></linearGradient><rect x="837.5" y="183.5" width="9" height="8" fill="url(#g45)" stroke="#74ACEE" stroke-width="1"/><path d="M840.5 184 V188.5 H846.5" fill="none" stroke="#74ACEE" stroke-width="1"/><path d="M847.6 177.8 V183.0 M845.0 180.4 H850.2" stroke="#505050" stroke-width="1.1"/><linearGradient id="g46" x1="0" y1="0" x2="0" y2="1"><stop offset="0" stop-color="#D8ECFE"/><stop offset="1" stop-color="#8CC0F8"/></linearGradient><rect x="863.5" y="184.5" width="14" height="6" fill="url(#g46)" stroke="#74ACEE" stroke-width="1"/><path d="M866 187.5 H874.6 M872.2 185.2 L874.8 187.5 L872.2 189.8" fill="none" stroke="#505050" stroke-width="1.1"/><circle cx="906.6" cy="185" r="4.2" fill="none" stroke="#CACACA" stroke-width="1.6" stroke-dasharray="1.7 1.6"/><circle cx="906.6" cy="185" r="3.2" fill="#F4F4F4" stroke="#C8C8C8" stroke-width="0.9"/><circle cx="906.6" cy="185" r="1.5" fill="#F0F0F0" stroke="#C8C8C8" stroke-width="0.8"/><path d="M913.5 185.4 V189.6 M911.4 187.5 H915.6" stroke="#A9A9A2" stroke-width="2.3" stroke-linecap="square" opacity="0.85"/><path d="M911.5 192.6 H915.5" stroke="#A9A9A2" stroke-width="2.2" stroke-linecap="square" opacity="0.85"/><path d="M913.5 185.1 V189.9 M911.1 187.5 H915.9" stroke="#FCF0A4" stroke-width="1.1"/><path d="M911.1 192.6 H915.9" stroke="#FCF0A4" stroke-width="1"/><path d="M930.6 180.6 L939.4 189.4 M939.4 180.6 L930.6 189.4" stroke="#E89898" stroke-width="2.2"/><circle cx="935" cy="185" r="3.6" fill="none" stroke="#DCDCDC" stroke-width="1" stroke-dasharray="1.5 1.2"/><path d="M941.5 185.4 V189.6 M939.4 187.5 H943.6" stroke="#A9A9A2" stroke-width="2.3" stroke-linecap="square" opacity="0.85"/><path d="M939.5 192.6 H943.5" stroke="#A9A9A2" stroke-width="2.2" stroke-linecap="square" opacity="0.85"/><path d="M941.5 185.1 V189.9 M939.1 187.5 H943.9" stroke="#FCF0A4" stroke-width="1.1"/><path d="M939.1 192.6 H943.9" stroke="#FCF0A4" stroke-width="1"/><linearGradient id="g47" x1="0" y1="0" x2="1" y2="1"><stop offset="0" stop-color="#FBE890"/><stop offset="1" stop-color="#F2C840"/></linearGradient><path d="M961.4 180 H968.6 L965.8 183.6 H969 L961 190 L963.6 185.6 H959.2 Z" fill="url(#g47)" stroke="#F0D070" stroke-width="0.5"/><path d="M969.5 185.4 V189.6 M967.4 187.5 H971.6" stroke="#A9A9A2" stroke-width="2.3" stroke-linecap="square" opacity="0.85"/><path d="M967.5 192.6 H971.5" stroke="#A9A9A2" stroke-width="2.2" stroke-linecap="square" opacity="0.85"/><path d="M969.5 185.1 V189.9 M967.1 187.5 H971.9" stroke="#FCF0A4" stroke-width="1.1"/><path d="M967.1 192.6 H971.9" stroke="#FCF0A4" stroke-width="1"/><path d="M988.6 181.6 H996.4 V188.4 Q992 189.8 987.6 189.4 Q988.8 187 988.6 181.6 Z" fill="#E4EEFC" stroke="#BCD4F6" stroke-width="1"/><path d="M997.5 185.4 V189.6 M995.4 187.5 H999.6" stroke="#A9A9A2" stroke-width="2.3" stroke-linecap="square" opacity="0.85"/><path d="M995.5 192.6 H999.5" stroke="#A9A9A2" stroke-width="2.2" stroke-linecap="square" opacity="0.85"/><path d="M997.5 185.1 V189.9 M995.1 187.5 H999.9" stroke="#FCF0A4" stroke-width="1.1"/><path d="M995.1 192.6 H999.9" stroke="#FCF0A4" stroke-width="1"/><linearGradient id="g48" x1="0" y1="0" x2="0" y2="1"><stop offset="0" stop-color="#E4E8F8"/><stop offset="1" stop-color="#CCD2EA"/></linearGradient><rect x="1023.5" y="181.5" width="9" height="4" fill="url(#g48)" stroke="#A29CC4" stroke-width="1"/><rect x="1027" y="179" width="2" height="2" fill="#E04868"/><path d="M1035.5 185.4 V189.6 M1033.4 187.5 H1037.6" stroke="#A9A9A2" stroke-width="2.3" stroke-linecap="square" opacity="0.85"/><path d="M1033.5 192.6 H1037.5" stroke="#A9A9A2" stroke-width="2.2" stroke-linecap="square" opacity="0.85"/><path d="M1035.5 185.1 V189.9 M1033.1 187.5 H1037.9" stroke="#FCF0A4" stroke-width="1.1"/><path d="M1033.1 192.6 H1037.9" stroke="#FCF0A4" stroke-width="1"/><linearGradient id="g49" x1="0" y1="0" x2="0" y2="1"><stop offset="0" stop-color="#E4E8F8"/><stop offset="1" stop-color="#CCD2EA"/></linearGradient><rect x="1051.5" y="181.5" width="9" height="4" fill="url(#g49)" stroke="#A29CC4" stroke-width="1"/><rect x="1055" y="186" width="2" height="2" fill="#E04868"/><path d="M1063.5 185.4 V189.6 M1061.4 187.5 H1065.6" stroke="#A9A9A2" stroke-width="2.3" stroke-linecap="square" opacity="0.85"/><path d="M1061.5 192.6 H1065.5" stroke="#A9A9A2" stroke-width="2.2" stroke-linecap="square" opacity="0.85"/><path d="M1063.5 185.1 V189.9 M1061.1 187.5 H1065.9" stroke="#FCF0A4" stroke-width="1.1"/><path d="M1061.1 192.6 H1065.9" stroke="#FCF0A4" stroke-width="1"/><rect x="1083.5" y="180.5" width="6" height="3.4" fill="#C0D8DC" stroke="#9CAEB4" stroke-width="1"/><rect x="1083.5" y="188.5" width="6" height="3.4" fill="#C0D8DC" stroke="#9CAEB4" stroke-width="1"/><path d="M1086.5 184.4 V188" stroke="#F05858" stroke-width="1.1"/><rect x="1111.5" y="180.5" width="6" height="3.4" fill="#C0D8DC" stroke="#9CAEB4" stroke-width="1"/><rect x="1111.5" y="188.5" width="6" height="3.4" fill="#C0D8DC" stroke="#9CAEB4" stroke-width="1"/><path d="M1114.5 184.4 V188" stroke="#F05858" stroke-width="1.1"/><path d="M1120 182 Q1123.6 186 1120 190.4" fill="none" stroke="#505050" stroke-width="1"/><path d="M1118.6 182 H1121.6 M1120 180.6 V183.4 M1118.6 190.4 H1121.6 M1120 189 V191.8" stroke="#505050" stroke-width="1"/><linearGradient id="g50" x1="0" y1="0" x2="1" y2="1"><stop offset="0" stop-color="#E8ECF8"/><stop offset="1" stop-color="#B8C0DC"/></linearGradient><rect x="1146.5" y="183.5" width="3" height="6" fill="url(#g50)" stroke="#9C98BC" stroke-width="1"/><linearGradient id="g51" x1="0" y1="0" x2="1" y2="1"><stop offset="0" stop-color="#E8ECF8"/><stop offset="1" stop-color="#B8C0DC"/></linearGradient><rect x="1157.5" y="183.5" width="3" height="6" fill="url(#g51)" stroke="#9C98BC" stroke-width="1"/><path d="M1150 186.5 H1157" stroke="#A0A0A0" stroke-width="1"/><path d="M1151.4 184.4 L1155.6 188.6 M1155.6 184.4 L1151.4 188.6" stroke="#E04868" stroke-width="1.1" stroke-dasharray="1.2 0.7"/><linearGradient id="g52" x1="0" y1="0" x2="1" y2="1"><stop offset="0" stop-color="#E8ECF8"/><stop offset="1" stop-color="#B8C0DC"/></linearGradient><rect x="1173.5" y="180.5" width="3" height="6" fill="url(#g52)" stroke="#9C98BC" stroke-width="1"/><linearGradient id="g53" x1="0" y1="0" x2="1" y2="1"><stop offset="0" stop-color="#E8ECF8"/><stop offset="1" stop-color="#B8C0DC"/></linearGradient><rect x="1185.5" y="184.5" width="3" height="6" fill="url(#g53)" stroke="#9C98BC" stroke-width="1"/><path d="M1177 183.5 H1180.5 V187.5 H1185" fill="none" stroke="#6A6A6A" stroke-width="1"/><text x="1183.6" y="186" text-anchor="middle" font-family="Liberation Sans, sans-serif" font-size="8.5" fill="#E04060">?</text><linearGradient id="g54" x1="0" y1="0" x2="1" y2="1"><stop offset="0" stop-color="#E8ECF8"/><stop offset="1" stop-color="#B8C0DC"/></linearGradient><rect x="1211.5" y="179.5" width="3" height="6" fill="url(#g54)" stroke="#9C98BC" stroke-width="1"/><linearGradient id="g55" x1="0" y1="0" x2="1" y2="1"><stop offset="0" stop-color="#E8ECF8"/><stop offset="1" stop-color="#B8C0DC"/></linearGradient><rect x="1223.5" y="186.5" width="3" height="6" fill="url(#g55)" stroke="#9C98BC" stroke-width="1"/><path d="M1215 182 L1223 190" stroke="#6A6A6A" stroke-width="1"/><linearGradient id="g56" x1="0" y1="0" x2="1" y2="1"><stop offset="0" stop-color="#E8ECF8"/><stop offset="1" stop-color="#B8C0DC"/></linearGradient><rect x="1239.5" y="180.5" width="3" height="6" fill="url(#g56)" stroke="#9C98BC" stroke-width="1"/><linearGradient id="g57" x1="0" y1="0" x2="1" y2="1"><stop offset="0" stop-color="#E8ECF8"/><stop offset="1" stop-color="#B8C0DC"/></linearGradient><rect x="1251.5" y="184.5" width="3" height="6" fill="url(#g57)" stroke="#9C98BC" stroke-width="1"/><path d="M1243 183.5 H1245 L1249 187.5 H1251" fill="none" stroke="#6A6A6A" stroke-width="1"/><linearGradient id="g58" x1="0" y1="0" x2="1" y2="1"><stop offset="0" stop-color="#E8ECF8"/><stop offset="1" stop-color="#B8C0DC"/></linearGradient><rect x="1267.5" y="180.5" width="3" height="6" fill="url(#g58)" stroke="#9C98BC" stroke-width="1"/><linearGradient id="g59" x1="0" y1="0" x2="1" y2="1"><stop offset="0" stop-color="#E8ECF8"/><stop offset="1" stop-color="#B8C0DC"/></linearGradient><rect x="1279.5" y="184.5" width="3" height="6" fill="url(#g59)" stroke="#9C98BC" stroke-width="1"/><path d="M1271 183.5 H1273 Q1274.6 183.5 1274.8 185.5 Q1275 187.5 1276.6 187.5 H1279" fill="none" stroke="#6A6A6A" stroke-width="1"/><linearGradient id="g60" x1="0" y1="0" x2="1" y2="1"><stop offset="0" stop-color="#E8ECF8"/><stop offset="1" stop-color="#B8C0DC"/></linearGradient><rect x="1295.5" y="180.5" width="3" height="6" fill="url(#g60)" stroke="#9C98BC" stroke-width="1"/><linearGradient id="g61" x1="0" y1="0" x2="1" y2="1"><stop offset="0" stop-color="#E8ECF8"/><stop offset="1" stop-color="#B8C0DC"/></linearGradient><rect x="1307.5" y="184.5" width="3" height="6" fill="url(#g61)" stroke="#9C98BC" stroke-width="1"/><path d="M1299 183.5 H1302.5 V187.5 H1307" fill="none" stroke="#6A6A6A" stroke-width="1"/><radialGradient id="g62" cx="0.5" cy="0.2" r="0.9"><stop offset="0" stop-color="#A8C4F8"/><stop offset="0.55" stop-color="#5584E4"/><stop offset="1" stop-color="#3A66D0"/></radialGradient><circle cx="1549" cy="186" r="7.3" fill="url(#g62)" stroke="#C4D4F4" stroke-width="0.8"/><text x="1549" y="190.4" text-anchor="middle" font-family="Liberation Sans, sans-serif" font-weight="bold" font-size="12.5" fill="#fff">?</text><radialGradient id="g63" cx="0.5" cy="0.3" r="0.8"><stop offset="0" stop-color="#FFFFFF"/><stop offset="0.6" stop-color="#C4C4C4"/><stop offset="1" stop-color="#9A9A9A"/></radialGradient><circle cx="1512" cy="1019" r="6.8" fill="url(#g63)" stroke="#D8D8D8" stroke-width="0.8"/><ellipse cx="1512" cy="1016.4" rx="4.6" ry="2.6" fill="#fff" opacity="0.7"/></svg>
</div>
</body>
</html>
